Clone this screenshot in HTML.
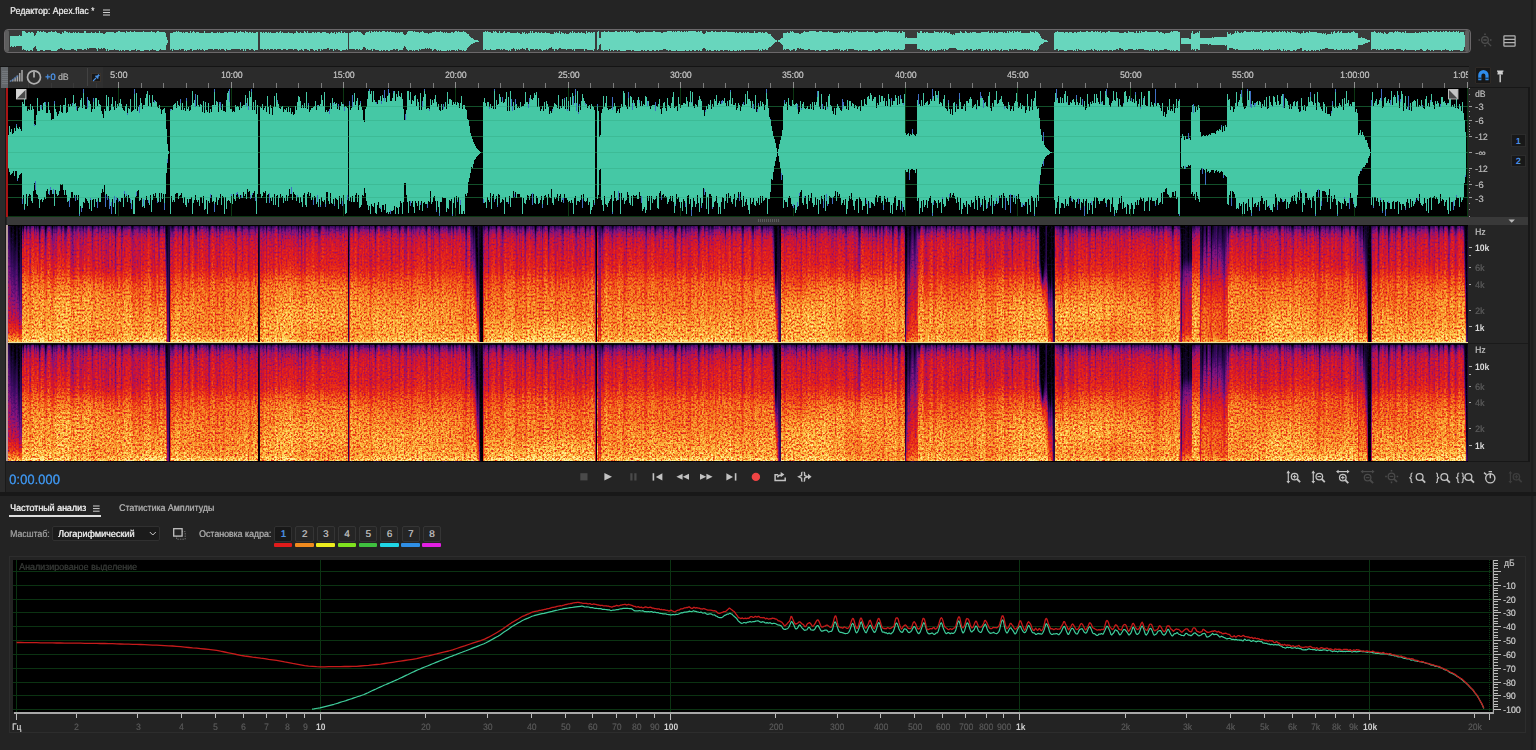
<!DOCTYPE html>
<html lang="ru"><head><meta charset="utf-8"><title>Adobe Audition</title>
<style>
html,body{margin:0;padding:0;background:#242424;}
body{width:1536px;height:750px;overflow:hidden;position:relative;font-family:"Liberation Sans",sans-serif;}
.b{position:absolute;display:block;}
.t{position:absolute;white-space:nowrap;transform-origin:0 50%;text-rendering:geometricPrecision;text-shadow:0.35px 0 0 currentColor;}
svg{overflow:hidden;}
</style></head><body>
<div class="b" style="left:0px;top:0px;width:1536px;height:750px;background:#242424;"></div>
<div class="b" style="left:1531.4px;top:0px;width:2.1px;height:750px;background:#1e1e1e;"></div>
<div class="b" style="left:1533.5px;top:0px;width:2.5px;height:750px;background:#272727;"></div>
<span class="t" style="left:9.5px;top:6.43px;font-size:9.8px;line-height:12.74px;color:#dedede;transform:scaleX(0.894);">Редактор: Apex.flac *</span>
<svg class="b" style="left:103px;top:8.5px" width="8" height="8"><path d="M0 1h7M0 3.5h7M0 6h7" stroke="#d0d0d0" stroke-width="1"/></svg>
<div class="b" style="left:4px;top:28.8px;width:1466.5px;height:24.4px;background:#3a3a3a;border:1.4px solid #6b686a;border-radius:4px;box-sizing:border-box;"></div>
<div class="b" style="left:5.2px;top:30.2px;width:3.6px;height:21.6px;background:#5e5e5e;border-radius:2px;"></div>
<div class="b" style="left:1465.4px;top:30.2px;width:3.6px;height:21.6px;background:#5e5e5e;border-radius:2px;"></div>
<svg class="b" style="left:0;top:0" width="1536" height="60" shape-rendering="crispEdges"><path d="M10.5 36.3V46.5M11.5 36V46.1M12.5 36.1V46.8M13.5 36.3V46.5M14.5 35.9V46.3M15.5 35.7V46.5M16.5 36.2V46M17.5 35.9V45.8M18.5 36.1V46.2M19.5 35.3V45.8M20.5 36.1V45.8M21.5 36V46.2M22.5 30.9V49.5M23.5 31.4V49.4M24.5 31.4V50.1M25.5 32.4V49.8M26.5 32.6V50.6M27.5 32.7V50.4M28.5 31.7V50.6M29.5 32.1V50.5M30.5 32.6V49.6M31.5 32V49.5M32.5 32.3V51.1M33.5 33V48.2M34.5 35.7V46.8M35.5 34.9V46.3M36.5 32.8V48.8M37.5 31.3V50.8M38.5 31V51.1M39.5 31.7V51M40.5 31.1V49.9M41.5 32.1V50M42.5 31.5V50.3M43.5 31V50.8M44.5 32.4V50.8M45.5 32.3V50.1M46.5 32.5V50.2M47.5 32.5V49.9M48.5 32.2V50.2M49.5 32.1V49.9M50.5 31.6V50M51.5 30.9V50.6M52.5 31.5V51.1M53.5 31.5V50.6M54.5 31.9V51.1M55.5 31.4V50.6M56.5 32.3V51.1M57.5 32.8V49.8M58.5 32.9V49.1M59.5 33.1V48.9M60.5 33.8V47.9M61.5 33.9V48.4M62.5 32.2V48.7M63.5 32.8V49.7M64.5 31.2V49.3M65.5 31.3V49.5M66.5 31.6V49.8M67.5 32V50.2M68.5 32.6V50.4M69.5 32.3V49.5M70.5 33.2V49.5M71.5 33V49.3M72.5 33.4V49.1M73.5 32V48.9M74.5 33V50.4M75.5 32.4V49.7M76.5 32.5V51M77.5 32.5V49.1M78.5 31.8V49M79.5 32.9V49M80.5 32.5V49.3M81.5 32.5V49.4M82.5 32.7V49.7M83.5 32.7V49.6M84.5 30.9V48.7M85.5 30.9V48.5M86.5 32.9V49.5M87.5 32.8V48.4M88.5 33.1V48.8M89.5 33V48M90.5 33.3V48.4M91.5 31.8V48M92.5 33.1V48.2M93.5 33V48.4M94.5 33.1V48M95.5 31.6V48.1M96.5 33V49.4M97.5 32.7V51.1M98.5 32.9V48.3M99.5 31.3V48.5M100.5 32.5V48.6M101.5 32.5V47.8M102.5 33.3V48.8M103.5 34.1V48.4M104.5 34V47.6M105.5 33.3V48.6M106.5 32.2V50.7M107.5 32.4V49.3M108.5 32.4V50.5M109.5 31.9V50.2M110.5 32.3V49.9M111.5 31.5V49.6M112.5 32.2V49.6M113.5 32V49.5M114.5 32.7V49.3M115.5 32.6V50.1M116.5 31.5V49.6M117.5 32V49.8M118.5 30.9V49.8M119.5 31V51.1M120.5 31.6V50M121.5 31.5V50.5M122.5 32.2V50.2M123.5 32.4V50.2M124.5 32.3V51.1M125.5 32.7V49.5M126.5 31.4V50.1M127.5 31.6V49.7M128.5 32.2V49.8M129.5 32.3V50.5M130.5 31.3V51.1M131.5 31.6V49.8M132.5 31.8V50.1M133.5 31.5V50.4M134.5 30.9V50.2M135.5 31.5V49.3M136.5 32V51.1M137.5 31.6V49.7M138.5 31.7V49.9M139.5 31.9V50.1M140.5 31.8V50.5M141.5 31.8V51.1M142.5 31.9V51.1M143.5 31V51M144.5 31.9V50.2M145.5 31.8V50.1M146.5 31.6V50.3M147.5 31.7V49.9M148.5 31.5V49.6M149.5 32.3V50.8M150.5 31.6V49.9M151.5 30.9V49.8M152.5 32.2V49.4M153.5 32V49.5M154.5 32.3V50.2M155.5 32.5V49.8M156.5 32.1V50.9M157.5 30.9V50.9M158.5 31.4V50.7M159.5 31.8V50.2M160.5 32V49.4M161.5 32V49.9M162.5 32.4V49.8M163.5 32V50.1M164.5 32.3V50.2M165.5 32.9V49.8M166.5 36.8V45.3M167.5 39.7V42.6M168.5 40.7V41.3M170.5 32.5V49.9M171.5 32.5V49.4M172.5 32.8V50.6M173.5 32.2V49.1M174.5 31.7V50.3M175.5 32.2V50.3M176.5 31.3V50.2M177.5 31.7V49.5M178.5 31.2V49.8M179.5 32.1V49.4M180.5 31.9V50M181.5 32.4V48.9M182.5 32.5V49.1M183.5 31.7V49.2M184.5 32.6V51.1M185.5 32.3V49.7M186.5 31.8V50.6M187.5 32.2V49.5M188.5 32.5V49.7M189.5 32.9V49.6M190.5 31.1V49.4M191.5 33.1V49.4M192.5 32.4V50.5M193.5 31.1V50.1M194.5 32.4V49.5M195.5 32.8V49.9M196.5 32.1V49.7M197.5 32.4V49.1M198.5 31.6V50.2M199.5 33.1V49.4M200.5 33V49.6M201.5 32.5V50.3M202.5 32.7V49.2M203.5 33.1V50.2M204.5 31.3V51.1M205.5 33.3V49.8M206.5 33V49.9M207.5 32.5V49.6M208.5 32.6V49.3M209.5 33V48.9M210.5 33.1V48.6M211.5 32.4V48.7M212.5 32.1V48.5M213.5 33V49.5M214.5 32.5V48.6M215.5 32.5V49.4M216.5 32.9V48.6M217.5 32.4V48.6M218.5 32.8V50.4M219.5 31.9V49.4M220.5 32.7V49.6M221.5 33V48.7M222.5 33V48.9M223.5 32.6V49.4M224.5 31.9V49.8M225.5 31.5V50.6M226.5 32.1V49.3M227.5 32.5V49.5M228.5 32.3V50.3M229.5 32.4V49.5M230.5 32.4V49.6M231.5 31.9V49.2M232.5 32.4V49.1M233.5 32.1V49.2M234.5 33V49.3M235.5 32.8V49.1M236.5 31.1V49.2M237.5 32.7V49.4M238.5 32.4V49.3M239.5 32.1V49.3M240.5 31.2V50.1M241.5 31.5V49.3M242.5 32.3V48.8M243.5 32.2V50.5M244.5 32.5V49.2M245.5 31.3V50.5M246.5 32.4V49.3M247.5 31.6V49.3M248.5 32.7V49M249.5 32.3V50M250.5 31.7V49.5M251.5 33V49.4M252.5 32.4V49.2M253.5 32.5V49.8M254.5 32.9V50.6M255.5 32.7V50M256.5 32V49.7M257.5 32.3V50M260.5 31.6V49.3M261.5 31.8V49.3M262.5 32.9V49.3M263.5 32.1V49.5M264.5 32.5V49.3M265.5 32.3V49.3M266.5 32.1V49.8M267.5 32.9V49M268.5 31.8V48.8M269.5 32.9V49.9M270.5 32V48.8M271.5 33.1V48.7M272.5 33V48.8M273.5 32.5V49.5M274.5 33V49M275.5 32.9V48.7M276.5 32.3V49.5M277.5 32.3V49.4M278.5 32.9V49M279.5 32.3V49.3M280.5 31.3V48.9M281.5 33.2V49.9M282.5 32V49.5M283.5 32.7V49.3M284.5 33.2V48.7M285.5 33.2V49.1M286.5 33.2V49.5M287.5 33.2V49.6M288.5 32.3V48.7M289.5 32.9V48.5M290.5 33.3V48.7M291.5 32.9V48.6M292.5 33.4V48.8M293.5 33.5V50M294.5 32.8V48.9M295.5 33.4V48.9M296.5 31.3V49.2M297.5 32V50.1M298.5 32.5V50.6M299.5 32.9V49.5M300.5 31.8V50.2M301.5 32.6V49.4M302.5 33.1V50.2M303.5 33.3V50.6M304.5 31V49.1M305.5 32.2V49.3M306.5 32.9V48.9M307.5 30.9V50M308.5 33.2V49.9M309.5 32.9V50.7M310.5 33V49.3M311.5 32.5V49M312.5 32.2V49.2M313.5 32.2V49.9M314.5 32.5V50.5M315.5 32.2V50.1M316.5 32.6V50M317.5 31.9V50.5M318.5 32.3V49.2M319.5 31.6V49.3M320.5 32.6V51.1M321.5 32.6V49.1M322.5 32.2V50M323.5 32.2V49M324.5 31.7V49.4M325.5 32.1V48.6M326.5 32.5V48.9M327.5 33.4V48M328.5 33.4V48M329.5 33.7V50.2M330.5 33.4V48.5M331.5 32.1V49.1M332.5 33V48.9M333.5 32.5V50.5M334.5 32.1V49M335.5 33.6V49.5M336.5 32.2V48.9M337.5 32.8V49M338.5 32.4V50.1M339.5 31.6V49.5M340.5 32.8V51.1M341.5 31V50.5M342.5 32.8V49.6M343.5 32.5V50M344.5 32V49.9M345.5 32.7V50.3M346.5 33.3V49.4M347.5 33.1V49.5M349.5 33.2V49.2M350.5 33V48.8M351.5 31.6V48.9M352.5 32.2V49.1M353.5 30.9V49.1M354.5 32.4V49.2M355.5 32.1V49.5M356.5 31.8V49.2M357.5 30.9V49.4M358.5 32.1V49.5M359.5 32.4V49.1M360.5 31.7V50M361.5 32.7V49.8M362.5 33.5V48.5M363.5 34.7V47M364.5 34.9V46.7M365.5 33V48.2M366.5 31.5V49.5M367.5 32.4V49.4M368.5 31.8V49.8M369.5 31.4V49.7M370.5 32.5V50.1M371.5 31.4V49M372.5 32.1V51.1M373.5 32.4V48.7M374.5 30.9V49.2M375.5 31.5V49.6M376.5 31.2V49.6M377.5 31.8V49.7M378.5 31.8V49.5M379.5 31.3V50.5M380.5 31.7V50.8M381.5 31.8V49.7M382.5 31.4V50.6M383.5 31.3V50.3M384.5 31.4V50.3M385.5 31.5V51.1M386.5 32V50.2M387.5 30.9V50.4M388.5 31.6V50.9M389.5 31.6V50.8M390.5 31V50.3M391.5 32.2V50.4M392.5 32.1V50.1M393.5 32.2V49.3M394.5 32.2V49.2M395.5 32.6V50.1M396.5 32.1V49.1M397.5 32.7V49.2M398.5 31.6V50.5M399.5 32.5V50.4M400.5 31.5V49.9M401.5 32.3V49.6M402.5 32.1V50.3M403.5 33.9V48.1M404.5 35.4V46.4M405.5 35.2V46.6M406.5 33.9V48.6M407.5 31.8V49.5M408.5 31.2V50.6M409.5 31.2V49.9M410.5 30.9V50M411.5 30.9V49.6M412.5 30.9V50.8M413.5 32.1V50M414.5 31.4V50.7M415.5 31.8V50.1M416.5 31.8V49.7M417.5 32.1V49.6M418.5 32.3V50.8M419.5 32.5V49M420.5 32V49.7M421.5 31.7V48.6M422.5 30.9V48.7M423.5 31.6V49M424.5 32.5V48.9M425.5 32.7V48.3M426.5 32.8V49.2M427.5 33.4V48.2M428.5 33.5V49.2M429.5 32.8V48M430.5 32.8V48.7M431.5 33.2V48.6M432.5 32.2V50.8M433.5 32.1V49.7M434.5 31.8V49.4M435.5 30.9V49.2M436.5 32V49.8M437.5 31.7V50.9M438.5 31.8V49.6M439.5 31.7V50.5M440.5 30.9V49.7M441.5 31.9V50.7M442.5 32.1V50.9M443.5 32.5V51.1M444.5 32.3V50.5M445.5 32.5V50.7M446.5 32.2V50.7M447.5 32.7V49.7M448.5 32.9V51M449.5 33V49.5M450.5 32.9V51.1M451.5 32.2V49.6M452.5 32.4V49.9M453.5 32.5V49.6M454.5 31.6V49.6M455.5 31.2V51M456.5 31.4V50.3M457.5 32.1V51.1M458.5 31.1V49.2M459.5 32.3V49.8M460.5 32.2V49.6M461.5 31.6V49.7M462.5 31.5V51.1M463.5 30.9V49.6M464.5 31.7V50.5M465.5 32V51.1M466.5 32.5V50M467.5 33.9V48.4M468.5 34.3V47.4M469.5 36.3V45.6M470.5 36.9V45.3M471.5 37.5V44M472.5 38.3V43.7M473.5 39.1V42.9M474.5 39.5V42.6M475.5 39.8V42.2M476.5 40V42M477.5 40.3V41.7M478.5 40.5V41.5M479.5 40.7V41.3M480.5 40.8V41.2M483.5 32V49.9M484.5 31.8V49.9M485.5 30.9V49.4M486.5 31.8V50.3M487.5 30.9V49.7M488.5 31.6V49.9M489.5 31.5V49.8M490.5 31.9V49.4M491.5 32.6V49.7M492.5 32.7V49.8M493.5 30.9V49.7M494.5 32.2V49.8M495.5 31V49.9M496.5 32.4V49M497.5 32.8V48.8M498.5 32.8V48.8M499.5 30.9V48.6M500.5 32.7V49.7M501.5 32.8V48.9M502.5 32.5V49.5M503.5 31.6V49.1M504.5 31V49.4M505.5 32.8V49.8M506.5 32.5V50.3M507.5 31.7V49.5M508.5 32.2V51.1M509.5 31.9V49.7M510.5 32.8V50.8M511.5 32.7V49.4M512.5 33.3V49.3M513.5 32.6V48.4M514.5 32.8V49.1M515.5 32.7V50.9M516.5 33.1V49.1M517.5 32.3V50.2M518.5 33V49.2M519.5 32.5V49.6M520.5 33.5V49.3M521.5 33.5V49.2M522.5 32.3V48.2M523.5 32.6V49.2M524.5 32.4V48.7M525.5 33.7V49.6M526.5 33.2V48.2M527.5 33.5V48.2M528.5 33.1V50M529.5 33.3V51.1M530.5 30.9V48.5M531.5 32.8V48.9M532.5 30.9V49.1M533.5 33V49.1M534.5 32.7V49.5M535.5 32.2V48.9M536.5 32.1V48.9M537.5 33.1V48.9M538.5 31.9V49.6M539.5 33.3V49.3M540.5 32.9V49.2M541.5 31.5V49.5M542.5 32.8V50.8M543.5 32.7V49.8M544.5 33.4V49.9M545.5 32.1V50.3M546.5 32.6V48.9M547.5 33.2V50.2M548.5 32.6V48.5M549.5 33.3V48.4M550.5 34.3V48.4M551.5 34.1V47.3M552.5 33.7V48.5M553.5 33.6V48.9M554.5 32.1V50.8M555.5 32.8V49.3M556.5 31.9V49M557.5 32.5V49.9M558.5 32.6V49.3M559.5 30.9V48.4M560.5 33.6V48.2M561.5 32.4V49.1M562.5 33.4V48.8M563.5 33V48.9M564.5 33.5V49.3M565.5 33V49.1M566.5 33.5V49.9M567.5 33.7V49.2M568.5 33.7V48.6M569.5 32.8V48.5M570.5 31.7V48.9M571.5 32.9V49.1M572.5 30.9V49.8M573.5 33.3V49M574.5 32.3V51.1M575.5 33V49.2M576.5 32.8V48.7M577.5 32.5V48.7M578.5 32.2V48.8M579.5 32.9V49.2M580.5 33V48.7M581.5 32.2V48.5M582.5 32.7V49.2M583.5 33.3V48.5M584.5 32.8V51.1M585.5 33.6V48.7M586.5 31.2V49.2M587.5 33.2V49.8M588.5 31.9V49.6M589.5 32.3V50.3M590.5 32.5V49.7M591.5 32.4V49.6M592.5 32.9V49.6M593.5 31.9V51.1M594.5 32V49.4M597.5 31.8V49.9M598.5 31.3V49.4M599.5 37.5V44.5M600.5 37.9V44M601.5 32.3V50M602.5 31.7V50.3M603.5 32.4V51M604.5 31V50.1M605.5 32.2V49.8M606.5 32.2V50.3M607.5 31.8V49.6M608.5 31V50.6M609.5 32.2V49.4M610.5 31.7V51.1M611.5 31.8V49.9M612.5 31.5V49.8M613.5 32.1V50.7M614.5 32.2V49.9M615.5 31.2V49.9M616.5 30.9V50.3M617.5 31.8V50.5M618.5 31.8V50M619.5 31.9V50M620.5 31.3V50.6M621.5 31.5V50.7M622.5 32.2V51.1M623.5 30.9V50.7M624.5 31.7V50.7M625.5 32.1V50.9M626.5 30.9V50.1M627.5 31.6V49.8M628.5 31.1V49.7M629.5 31.6V49.7M630.5 31V50M631.5 30.9V51.1M632.5 30.9V50M633.5 31.5V50.4M634.5 30.9V51.1M635.5 32V50.9M636.5 32.5V50.8M637.5 32.8V51.1M638.5 32.1V50.6M639.5 32.5V50.5M640.5 32V50.5M641.5 31.7V50.1M642.5 31.9V50M643.5 31.5V50.5M644.5 31.4V49.9M645.5 32V50.5M646.5 32V50.7M647.5 32.1V50M648.5 32.2V50.1M649.5 31.6V51.1M650.5 31.6V50.6M651.5 31.8V51.1M652.5 32.1V50.2M653.5 31.3V50.3M654.5 31.4V50.5M655.5 31.9V50.5M656.5 32.1V50.4M657.5 31.6V50.1M658.5 31.5V51.1M659.5 31.6V50.4M660.5 31.9V50.2M661.5 32.5V49.6M662.5 32.7V49.5M663.5 32.2V49.3M664.5 31.8V49.1M665.5 31.6V49.1M666.5 31.8V49.9M667.5 31.4V49.6M668.5 31.1V51.1M669.5 31.3V49.8M670.5 30.9V49.8M671.5 30.9V50.6M672.5 31.7V51M673.5 31V50.5M674.5 31.5V51.1M675.5 31.3V50.8M676.5 31.6V50.1M677.5 30.9V51.1M678.5 30.9V50.6M679.5 31V51.1M680.5 31.6V50.7M681.5 31.3V51.1M682.5 31.9V50.9M683.5 31.9V50.7M684.5 30.9V51.1M685.5 31.6V50.3M686.5 30.9V50.7M687.5 31.5V50.9M688.5 31.2V51.1M689.5 30.9V50.1M690.5 30.9V51.1M691.5 30.9V51.1M692.5 30.9V50.4M693.5 30.9V50.2M694.5 30.9V50.5M695.5 31.4V50.5M696.5 31.8V50.1M697.5 32.3V50.1M698.5 31.2V51.1M699.5 31.8V50.3M700.5 31.2V51.1M701.5 31.2V50.9M702.5 32.7V49.3M703.5 33.9V48.2M704.5 33.9V48M705.5 32.8V49.1M706.5 30.9V50.5M707.5 31.6V50.4M708.5 31.9V51.1M709.5 31.8V49.6M710.5 31.7V49.8M711.5 31.4V51.1M712.5 31.1V50.7M713.5 31.8V51.1M714.5 31.6V50.2M715.5 30.9V49.8M716.5 31.7V50.5M717.5 31.7V50.3M718.5 31.8V50.6M719.5 31.7V50.5M720.5 31.8V49.6M721.5 31.3V50.1M722.5 31.9V50.3M723.5 32.1V50.8M724.5 32.3V50.3M725.5 32.2V50.4M726.5 31.3V49.8M727.5 32.1V49.9M728.5 32V50.8M729.5 32.2V50.2M730.5 31.9V51.1M731.5 32.2V51M732.5 31.5V51.1M733.5 32.2V50M734.5 31.8V51.1M735.5 32.6V51M736.5 31.9V51M737.5 32.8V50.2M738.5 32.9V50.7M739.5 32.4V49.9M740.5 31.9V51.1M741.5 32.5V49.7M742.5 32.6V49.6M743.5 32.1V50M744.5 32.8V50.5M745.5 32V50.2M746.5 32.7V50M747.5 32.4V50.2M748.5 31.7V50.1M749.5 32.8V50.2M750.5 33V50.1M751.5 33V49.7M752.5 32.9V50.2M753.5 32.9V49.6M754.5 30.9V49.5M755.5 32.8V49.8M756.5 32.5V50M757.5 32.7V49.7M758.5 31.6V49.4M759.5 31.6V50.6M760.5 31.6V49.8M761.5 32.9V50.6M762.5 31.7V49.3M763.5 33.1V49.5M764.5 32.6V50M765.5 31.5V48.8M766.5 31.8V50.1M767.5 33V49.5M768.5 33.5V47.9M769.5 33.7V47.1M770.5 34.4V46.6M771.5 36.4V46M772.5 36.5V45M773.5 38V44.2M774.5 38.8V43.2M775.5 39.6V42.4M776.5 40.3V41.7M778.5 40.4V41.6M779.5 39.6V42.4M780.5 38.9V43.2M781.5 38.1V44.1M782.5 37.5V45M783.5 32.7V49.8M784.5 33.3V49.1M785.5 33.1V50.4M786.5 32.8V49.4M787.5 31.6V49.1M788.5 33.1V49.2M789.5 33.1V49.8M790.5 31.1V51.1M791.5 32V49.8M792.5 30.9V49.6M793.5 31.9V48.9M794.5 32.9V49M795.5 32.6V51.1M796.5 32.8V49.5M797.5 32.7V47.9M798.5 33.1V48.4M799.5 33.7V48.7M800.5 34.1V48.2M801.5 33.3V49.4M802.5 33.2V49.3M803.5 31.5V49.3M804.5 30.9V50.4M805.5 32.3V50.1M806.5 31.8V50.4M807.5 32.2V49.7M808.5 32.2V49.4M809.5 31V49.2M810.5 30.9V50.2M811.5 31V49.8M812.5 30.9V49.9M813.5 31.1V49.6M814.5 30.9V50.4M815.5 30.9V50.7M816.5 31.5V50.1M817.5 31.9V49.9M818.5 31.9V49.7M819.5 31.4V51.1M820.5 31.4V51.1M821.5 30.9V49.8M822.5 32V50M823.5 32.1V50M824.5 32.1V50.3M825.5 32.1V49.8M826.5 32.3V50.7M827.5 32.3V50.5M828.5 31V50.3M829.5 32.1V50.2M830.5 32.1V50.3M831.5 31.7V49.8M832.5 32.2V50.1M833.5 33V49M834.5 33.4V49.6M835.5 33.4V49.3M836.5 33.2V48.6M837.5 32.5V48.8M838.5 32.2V49.9M839.5 32.6V49.1M840.5 32V50.6M841.5 31.3V50.4M842.5 32.1V50.1M843.5 30.9V50.5M844.5 32.3V49.6M845.5 32.2V49.8M846.5 32V49M847.5 32V51.1M848.5 32.5V49.4M849.5 32.3V49M850.5 31.3V49.3M851.5 32.5V49.1M852.5 31.1V49.2M853.5 32.4V49.2M854.5 32.1V49.9M855.5 32.2V49.6M856.5 31.3V49.7M857.5 31.3V49.7M858.5 31.8V51.1M859.5 32.3V49.9M860.5 32.3V50.2M861.5 31.8V51.1M862.5 32V50.2M863.5 31.7V49.8M864.5 32V49.9M865.5 31.7V49.9M866.5 32.4V50.2M867.5 31.3V50.1M868.5 31.9V51.1M869.5 32.2V50.7M870.5 31.8V50.7M871.5 32.4V50.9M872.5 32.4V50M873.5 31V50.1M874.5 32V50.7M875.5 32.8V49.7M876.5 32.6V49.9M877.5 32.5V50.2M878.5 31.5V49.3M879.5 32.4V49.2M880.5 32.2V49.8M881.5 32V50.7M882.5 31.7V51.1M883.5 31V49.8M884.5 32V49.9M885.5 31.2V50.4M886.5 31.3V49.4M887.5 32.3V49.6M888.5 30.9V49.4M889.5 32.2V49.8M890.5 31.9V51.1M891.5 32.3V50M892.5 31.6V49.9M893.5 32.1V50.4M894.5 32.2V49.4M895.5 31.6V50.1M896.5 31.5V49.9M897.5 32.8V50M898.5 31.8V49.2M899.5 31.1V49.6M900.5 32.5V49.8M901.5 32.5V49.7M902.5 30.9V49.9M903.5 31.7V50M904.5 32.3V49.3M905.5 38.1V44.1M906.5 37.4V44.2M907.5 37.8V44.2M908.5 37.9V44.3M909.5 37.9V44M910.5 38.1V44M911.5 37.9V44M912.5 38V44.4M913.5 38V44.1M914.5 37.8V44.2M915.5 37.8V44.4M916.5 37.7V44.1M917.5 32.4V49.3M918.5 33V48.9M919.5 32.5V49.1M920.5 30.9V49.7M921.5 31.4V50.4M922.5 32.5V49.3M923.5 32.8V50.1M924.5 32.3V50.1M925.5 32.8V51.1M926.5 32.3V50.3M927.5 31.6V49.8M928.5 33V51.1M929.5 33.1V49.9M930.5 33.2V49.2M931.5 33.2V49.1M932.5 32.8V50.7M933.5 32.8V49.7M934.5 30.9V50.7M935.5 32.4V49.8M936.5 31.7V51.1M937.5 32.3V49.7M938.5 32.2V50.1M939.5 32.6V49.9M940.5 32V50.1M941.5 32.5V49.2M942.5 32.3V49.7M943.5 31.3V49.2M944.5 32.7V50.6M945.5 32V49.1M946.5 32.4V49.5M947.5 32.8V49.9M948.5 32.9V48.5M949.5 31.5V48.4M950.5 33.8V48.4M951.5 34.4V48.2M952.5 34.9V48.4M953.5 34.3V47.9M954.5 34.5V48.1M955.5 33.3V48.3M956.5 33.4V49.4M957.5 33.1V49.5M958.5 32.9V49.7M959.5 32.8V49.6M960.5 30.9V50.1M961.5 31.9V50.4M962.5 32.7V49.7M963.5 32.7V50.8M964.5 32.5V50.2M965.5 30.9V49.6M966.5 32.3V49.4M967.5 32.7V48.9M968.5 32.8V50.4M969.5 32.8V50.3M970.5 32.3V49.1M971.5 32.5V49.4M972.5 31.9V50.9M973.5 31.9V49.8M974.5 32V49.9M975.5 32.3V50.4M976.5 32.7V49.4M977.5 32.5V49.5M978.5 32.9V48.8M979.5 32.5V48.7M980.5 32.9V48.5M981.5 32.3V51.1M982.5 31.9V48.7M983.5 32.4V50.9M984.5 32.3V49.6M985.5 31.5V50.3M986.5 32.2V49M987.5 31.9V49.8M988.5 30.9V50.5M989.5 33V48.9M990.5 33.1V49.6M991.5 32.4V50.9M992.5 33.1V49.5M993.5 30.9V49.6M994.5 32.6V50M995.5 32.3V49.4M996.5 32.9V50.2M997.5 32.8V49.7M998.5 32.2V49.9M999.5 32V50.5M1000.5 32V49.8M1001.5 32V49.2M1002.5 31.7V50.7M1003.5 32.8V49.7M1004.5 32.4V49.9M1005.5 32.5V50.1M1006.5 32.8V49.5M1007.5 31.1V49.8M1008.5 33V50.5M1009.5 31.1V49.4M1010.5 32.3V49.1M1011.5 31.9V49.6M1012.5 30.9V49.2M1013.5 32.7V49.9M1014.5 31.4V49.3M1015.5 31.6V49.3M1016.5 32V49.4M1017.5 31.3V49.7M1018.5 32V49.8M1019.5 32.4V50M1020.5 30.9V49.6M1021.5 32.5V50.1M1022.5 32.6V49.4M1023.5 32.8V49.5M1024.5 32.6V49.1M1025.5 32.6V49.4M1026.5 32.7V50.1M1027.5 32.9V49.2M1028.5 32.9V49.9M1029.5 32.9V49.4M1030.5 31.4V49.7M1031.5 31.8V49.8M1032.5 32.3V49.5M1033.5 32.2V50.7M1034.5 32.7V51.1M1035.5 31.2V50.3M1036.5 32.3V50.6M1037.5 31.5V49.9M1038.5 32.7V49.2M1039.5 34.2V46.2M1040.5 36.3V45.3M1041.5 37.9V43.8M1042.5 38.7V43.5M1043.5 39.1V42.7M1044.5 39.8V42.2M1045.5 40V41.9M1046.5 40.4V41.6M1047.5 40.5V41.5M1048.5 40.7V41.3M1049.5 40.8V41.2M1050.5 40.9V41.1M1054.5 32.5V49.5M1055.5 32.3V49.8M1056.5 31.7V49.4M1057.5 30.9V49.3M1058.5 31.9V51.1M1059.5 31.6V49.8M1060.5 31.7V50.3M1061.5 31.9V50.3M1062.5 31.7V50.2M1063.5 31.7V50.2M1064.5 32.7V51.1M1065.5 32.3V51.1M1066.5 32.4V51.1M1067.5 32.3V50.2M1068.5 32.8V49.8M1069.5 31.6V50M1070.5 32.3V49.7M1071.5 31.8V50M1072.5 32.5V49.7M1073.5 32.8V50.8M1074.5 32.4V50M1075.5 32.1V51M1076.5 32.5V49.1M1077.5 32.4V51.1M1078.5 31.6V49.4M1079.5 31.9V49.5M1080.5 31.4V49.7M1081.5 32.2V50.2M1082.5 31.8V50.8M1083.5 31.8V49.7M1084.5 31.9V50.9M1085.5 31.7V51M1086.5 31.1V49.7M1087.5 30.9V49.6M1088.5 32.2V49.6M1089.5 31.8V49.5M1090.5 32.1V50.4M1091.5 30.9V49.3M1092.5 30.9V50.3M1093.5 31.5V50.8M1094.5 31.7V49.4M1095.5 30.9V49.5M1096.5 32.1V50M1097.5 30.9V51.1M1098.5 31.9V49.8M1099.5 31.8V50.6M1100.5 31.4V50.2M1101.5 32.6V49.8M1102.5 31.6V50.5M1103.5 32.2V50.1M1104.5 32V50.3M1105.5 32.9V50.2M1106.5 32.3V50.1M1107.5 32.1V49.7M1108.5 31.4V50.5M1109.5 30.9V49.8M1110.5 31.9V50.2M1111.5 32V50.1M1112.5 32.2V51.1M1113.5 31.8V50M1114.5 32.2V49.8M1115.5 32.3V50.1M1116.5 31.7V49.1M1117.5 31.9V49.4M1118.5 32.3V49.9M1119.5 32.9V48.4M1120.5 32.8V48.3M1121.5 33V49.1M1122.5 32.8V49.3M1123.5 32.7V49.7M1124.5 31.7V51.1M1125.5 32.2V50M1126.5 32.7V49.9M1127.5 32.7V49.8M1128.5 31.2V49.2M1129.5 32.3V49.2M1130.5 32.1V48.7M1131.5 31.7V49.1M1132.5 32V48.9M1133.5 32.4V49.7M1134.5 32.6V49.9M1135.5 33.1V50M1136.5 31.4V49M1137.5 32.9V50.1M1138.5 32.6V48.6M1139.5 31.4V48.8M1140.5 32.7V49.1M1141.5 31.3V49M1142.5 32V48.9M1143.5 32.2V49.3M1144.5 31.7V50.2M1145.5 30.9V49.7M1146.5 30.9V50M1147.5 31.9V49.6M1148.5 31.6V50.4M1149.5 32.1V50.7M1150.5 32.3V50.2M1151.5 31.6V50.8M1152.5 32.1V49.4M1153.5 31.7V51M1154.5 32.1V49.4M1155.5 32V49.8M1156.5 30.9V49.5M1157.5 30.9V49.6M1158.5 32.2V50.8M1159.5 32.6V49.6M1160.5 31.7V49.9M1161.5 31.7V50.3M1162.5 32.9V49.5M1163.5 33.2V49.6M1164.5 33.6V49.1M1165.5 32.9V48.7M1166.5 33V48.5M1167.5 32.7V49.9M1168.5 33V49.8M1169.5 32.8V49.7M1170.5 32.4V50.5M1171.5 31.4V50.1M1172.5 31.9V51.1M1173.5 31V50.1M1174.5 30.9V50.8M1175.5 30.9V50.5M1176.5 31.4V49.9M1177.5 30.9V50.2M1178.5 32.1V51.1M1179.5 31.8V51.1M1181.5 38.1V43.9M1182.5 38.3V43.7M1183.5 38.3V43.9M1184.5 38.1V43.6M1185.5 38.3V43.7M1186.5 38V44M1187.5 38.4V43.5M1188.5 38.1V43.6M1189.5 38.5V44M1190.5 38.5V43.5M1191.5 33.3V49.5M1192.5 31.4V49M1193.5 33.6V49.5M1194.5 33.5V49.3M1195.5 32.8V50.6M1196.5 32.9V49.1M1197.5 32.1V49.2M1198.5 32.7V49.5M1199.5 31.4V49.6M1200.5 38.1V43.8M1201.5 37.7V44M1202.5 37.7V44.1M1203.5 37.7V44.4M1204.5 37.7V44.1M1205.5 37.6V44.2M1206.5 37.9V44M1207.5 37.6V44.1M1208.5 37.7V44.9M1209.5 37.7V44.2M1210.5 38V44.2M1211.5 37.6V44.7M1212.5 37.2V44.8M1213.5 37.5V44.7M1214.5 37.4V45.1M1215.5 37.4V44.8M1216.5 37.4V44.8M1217.5 37.3V44.7M1218.5 37.2V45.1M1219.5 37.1V44.7M1220.5 37.3V44.7M1221.5 37.1V44.9M1222.5 36.5V45M1223.5 37.1V45.1M1224.5 37.2V45M1225.5 37.1V45.5M1226.5 36.6V44.9M1227.5 31.8V49.5M1228.5 33.6V49.6M1229.5 34V48.3M1230.5 33.4V48.4M1231.5 34.5V48.1M1232.5 33.9V47.8M1233.5 34V48.7M1234.5 32.5V49.1M1235.5 31.1V49.8M1236.5 32.8V49.4M1237.5 30.9V49.3M1238.5 32V49.8M1239.5 32.9V49.7M1240.5 32.6V50.3M1241.5 32V50M1242.5 32.7V50M1243.5 32.2V50.3M1244.5 31V49.6M1245.5 30.9V50.3M1246.5 31.9V50M1247.5 31.8V50.4M1248.5 32.1V50.2M1249.5 31.8V50.1M1250.5 31.8V49.7M1251.5 31V49.8M1252.5 32V50.2M1253.5 30.9V49.4M1254.5 32.1V49.6M1255.5 31.6V49.8M1256.5 31.7V49.4M1257.5 31.9V50.1M1258.5 31.7V49.4M1259.5 31.7V50M1260.5 30.9V49.3M1261.5 30.9V49.5M1262.5 32.5V50.4M1263.5 32.4V50.9M1264.5 32.4V50.2M1265.5 31.9V49.9M1266.5 31.3V50.2M1267.5 32.4V49.8M1268.5 31.9V49.8M1269.5 32.2V49.2M1270.5 31.4V49.6M1271.5 32.4V49.9M1272.5 32.7V50.4M1273.5 32.2V50.2M1274.5 32.4V49.8M1275.5 30.9V49.7M1276.5 31.8V49.8M1277.5 32.1V49.3M1278.5 32.1V49.6M1279.5 31.4V49.4M1280.5 31.6V49.5M1281.5 31.9V50.6M1282.5 30.9V50.9M1283.5 31.6V49.4M1284.5 31.4V50.8M1285.5 32.1V50M1286.5 32.5V50.7M1287.5 30.9V49.8M1288.5 32.3V50.4M1289.5 31.7V49.6M1290.5 32.6V50.5M1291.5 30.9V50.9M1292.5 31.6V51.1M1293.5 32.1V49.5M1294.5 31.9V49.8M1295.5 32.3V51.1M1296.5 32.5V49.7M1297.5 31.7V49M1298.5 33.4V48.6M1299.5 32.6V48.5M1300.5 33.8V47.8M1301.5 33.4V48.4M1302.5 33.2V50.5M1303.5 31.3V50.6M1304.5 33.2V49.8M1305.5 32.9V49.5M1306.5 32.4V50.5M1307.5 31.6V50.5M1308.5 32.6V49.7M1309.5 31.2V51.1M1310.5 32.3V51M1311.5 32.3V49.9M1312.5 32.3V50M1313.5 32.2V51.1M1314.5 31.7V50.2M1315.5 31.9V51M1316.5 31.5V50M1317.5 32.5V49.5M1318.5 32.8V50.2M1319.5 32.7V50.5M1320.5 32.8V49.3M1321.5 33.3V50.4M1322.5 33.6V49.2M1323.5 32.8V48.8M1324.5 33.6V49M1325.5 33.4V48.2M1326.5 34.6V48.1M1327.5 33.6V48.4M1328.5 34V48.6M1329.5 33.9V49.2M1330.5 33.5V48.7M1331.5 32.3V48.5M1332.5 33.5V48.8M1333.5 32.3V48.9M1334.5 31V49.5M1335.5 32.8V49.9M1336.5 32.8V49.4M1337.5 32V49.5M1338.5 31V49.5M1339.5 32.5V50.3M1340.5 32.4V49.9M1341.5 30.9V49M1342.5 32.5V49.6M1343.5 33V49.6M1344.5 33V49.4M1345.5 32.6V49.5M1346.5 32.6V49.4M1347.5 32.7V49.7M1348.5 31.9V48.8M1349.5 32.8V49.6M1350.5 32.9V50M1351.5 31.7V50.1M1352.5 31.7V49.1M1353.5 31.1V48.9M1354.5 31.9V48.9M1355.5 32.5V49M1356.5 32.9V49.6M1357.5 33.4V49.3M1358.5 37.7V44.7M1359.5 37.5V44.6M1360.5 37.6V44.7M1361.5 37.3V44.5M1362.5 37.9V44.5M1363.5 38.1V43.9M1364.5 38.2V43.7M1365.5 38.8V43.3M1366.5 39.1V42.9M1367.5 39.6V42.5M1368.5 39.9V42.1M1369.5 40.4V41.5M1371.5 32V49.7M1372.5 31.6V49.3M1373.5 31.7V48.7M1374.5 31.2V49.2M1375.5 32.2V48.7M1376.5 32.6V50.3M1377.5 32.7V49.4M1378.5 32.4V49.6M1379.5 33.2V49.6M1380.5 32.3V49.2M1381.5 33.4V50.4M1382.5 32.9V50.2M1383.5 33.7V49.5M1384.5 31.5V49.3M1385.5 32.5V49.4M1386.5 33.7V49.8M1387.5 33.8V49.2M1388.5 32.6V50.2M1389.5 32.4V49M1390.5 31.8V49.3M1391.5 32.2V49.2M1392.5 32.4V49.4M1393.5 32.7V49M1394.5 31.5V49.5M1395.5 30.9V49.5M1396.5 32.1V48.9M1397.5 30.9V49.4M1398.5 32V49.4M1399.5 31.6V49.3M1400.5 32.1V49.3M1401.5 32.5V49.5M1402.5 32.4V49.9M1403.5 32V51.1M1404.5 32.8V49.5M1405.5 30.9V49.4M1406.5 32.7V50.2M1407.5 32.9V49.9M1408.5 32.9V50M1409.5 32.5V49.6M1410.5 32.6V50.2M1411.5 32.7V49.6M1412.5 32.6V49.8M1413.5 32.7V49.8M1414.5 32.8V49.6M1415.5 31.8V50.9M1416.5 33.2V49.9M1417.5 33.2V49.7M1418.5 33.3V50M1419.5 31.8V50.1M1420.5 32.7V49.4M1421.5 31.6V49.3M1422.5 32.2V50M1423.5 31.8V50.5M1424.5 32.4V50.9M1425.5 31.8V50.5M1426.5 32.3V49.6M1427.5 32.5V49.4M1428.5 30.9V49.8M1429.5 31.9V49.6M1430.5 31.6V50.9M1431.5 31.6V49.9M1432.5 31V50.2M1433.5 31.4V50.7M1434.5 31.9V50.1M1435.5 31.5V49.6M1436.5 30.9V50.4M1437.5 32.1V49.7M1438.5 31.7V49.6M1439.5 32.2V49.6M1440.5 31.2V50M1441.5 32.4V51.1M1442.5 31.7V49.5M1443.5 31.2V49.7M1444.5 32.3V49.7M1445.5 30.9V49.3M1446.5 31V49.7M1447.5 32V50.2M1448.5 32.1V50.1M1449.5 31.3V51.1M1450.5 31.7V51.1M1451.5 31.8V49.5M1452.5 31.9V50.7M1453.5 31.3V49.5M1454.5 31.7V50.1M1455.5 31.7V50M1456.5 31.3V50.4M1457.5 32.2V50M1458.5 31.2V50.3M1459.5 32.6V50.2M1460.5 31.5V51.1M1461.5 32.1V51M1462.5 32.2V50.5M1463.5 32.4V49.5M1464.5 34.6V47.4" stroke="#68d6bd" stroke-width="1" fill="none"/></svg>
<svg class="b" style="left:1476px;top:32px" width="20" height="18" fill="none" stroke="#4d4d4d" stroke-width="1.3">
<circle cx="9" cy="8" r="3.3"/><path d="M7.3 8h3.4M11.5 10.5l3.6 3.6" /><path d="M9 1.5v1.5M9 13v1.5M2.5 8h1.5M14 8h1.5" stroke-width="1.6"/></svg>
<svg class="b" style="left:1502.6px;top:34.6px" width="14" height="13" fill="none" stroke="#b4b4b4"><rect x="0.9" y="0.9" width="11.2" height="10.2" rx="0.6" stroke-width="1.2"/><path d="M1 4.4h11M1 7.6h11" stroke-width="1.2"/></svg>
<div class="b" style="left:0px;top:66px;width:1468.5px;height:22px;background:#2b2b2b;"></div>
<div class="b" style="left:0px;top:66px;width:1468.5px;height:1px;background:#141414;"></div>
<svg class="b" style="left:0;top:0" width="1469" height="90" shape-rendering="crispEdges"><path d="M118.5 81.5V88M231.5 81.5V88M343.5 81.5V88M455.5 81.5V88M568.5 81.5V88M680.5 81.5V88M793.5 81.5V88M905.5 81.5V88M1017.5 81.5V88M1130.5 81.5V88M1242.5 81.5V88M1354.5 81.5V88M1467.5 81.5V88" stroke="#8f8f8f" stroke-width="1"/><path d="M28.5 83.3V88M51.5 83.3V88M73.5 83.3V88M96.5 83.3V88M141.5 83.3V88M163.5 83.3V88M186.5 83.3V88M208.5 83.3V88M253.5 83.3V88M276.5 83.3V88M298.5 83.3V88M321.5 83.3V88M366.5 83.3V88M388.5 83.3V88M410.5 83.3V88M433.5 83.3V88M478.5 83.3V88M500.5 83.3V88M523.5 83.3V88M545.5 83.3V88M590.5 83.3V88M613.5 83.3V88M635.5 83.3V88M658.5 83.3V88M703.5 83.3V88M725.5 83.3V88M748.5 83.3V88M770.5 83.3V88M815.5 83.3V88M838.5 83.3V88M860.5 83.3V88M882.5 83.3V88M927.5 83.3V88M950.5 83.3V88M972.5 83.3V88M995.5 83.3V88M1040.5 83.3V88M1062.5 83.3V88M1085.5 83.3V88M1107.5 83.3V88M1152.5 83.3V88M1175.5 83.3V88M1197.5 83.3V88M1220.5 83.3V88M1265.5 83.3V88M1287.5 83.3V88M1310.5 83.3V88M1332.5 83.3V88M1377.5 83.3V88M1399.5 83.3V88M1422.5 83.3V88M1444.5 83.3V88" stroke="#7c7c7c" stroke-width="1"/></svg>
<div class="b" style="left:104px;top:67px;width:1364.3px;height:21px;overflow:hidden">
<span class="t" style="left:6.13px;top:2.13px;font-size:9.3px;line-height:12.09px;color:#b6b6b6;transform:scaleX(0.961);">5:00</span>
<span class="t" style="left:116.5px;top:2.13px;font-size:9.3px;line-height:12.09px;color:#b6b6b6;transform:scaleX(0.92);">10:00</span>
<span class="t" style="left:228.88px;top:2.13px;font-size:9.3px;line-height:12.09px;color:#b6b6b6;transform:scaleX(0.92);">15:00</span>
<span class="t" style="left:341.25px;top:2.13px;font-size:9.3px;line-height:12.09px;color:#b6b6b6;transform:scaleX(0.92);">20:00</span>
<span class="t" style="left:453.63px;top:2.13px;font-size:9.3px;line-height:12.09px;color:#b6b6b6;transform:scaleX(0.92);">25:00</span>
<span class="t" style="left:566px;top:2.13px;font-size:9.3px;line-height:12.09px;color:#b6b6b6;transform:scaleX(0.92);">30:00</span>
<span class="t" style="left:678.38px;top:2.13px;font-size:9.3px;line-height:12.09px;color:#b6b6b6;transform:scaleX(0.92);">35:00</span>
<span class="t" style="left:790.75px;top:2.13px;font-size:9.3px;line-height:12.09px;color:#b6b6b6;transform:scaleX(0.92);">40:00</span>
<span class="t" style="left:903.13px;top:2.13px;font-size:9.3px;line-height:12.09px;color:#b6b6b6;transform:scaleX(0.92);">45:00</span>
<span class="t" style="left:1015.5px;top:2.13px;font-size:9.3px;line-height:12.09px;color:#b6b6b6;transform:scaleX(0.92);">50:00</span>
<span class="t" style="left:1127.88px;top:2.13px;font-size:9.3px;line-height:12.09px;color:#b6b6b6;transform:scaleX(0.92);">55:00</span>
<span class="t" style="left:1236.3px;top:2.13px;font-size:9.3px;line-height:12.09px;color:#b6b6b6;transform:scaleX(0.944);">1:00:00</span>
<span class="t" style="left:1348.67px;top:2.13px;font-size:9.3px;line-height:12.09px;color:#b6b6b6;transform:scaleX(0.944);">1:05:00</span>
</div>
<div class="b" style="left:0px;top:67px;width:103px;height:21px;background:#303030;opacity:.88;"></div>
<div class="b" style="left:1.2px;top:67px;width:6.8px;height:20.5px;background:#63676b;"></div>
<svg class="b" style="left:2px;top:70px" width="6" height="16"><path d="M1 1v14M3 1v14M5 1v14" stroke="#858a90" stroke-width="1" stroke-dasharray="1 1"/></svg>
<svg class="b" style="left:9px;top:69px" width="15" height="14"><path d="M1.5 12.5v-1M3.8 12.5v-2.2M6.1 12.5v-4M8.4 12.5v-6M10.7 12.5v-8.5M13 12.5v-11.5" stroke="#a9a9a9" stroke-width="1.5"/><path d="M1 12.8L9 6.5" stroke="#3f6fb0" stroke-width="1.2" opacity=".7"/></svg>
<svg class="b" style="left:25px;top:68px" width="18" height="18" fill="none" stroke="#b0b0b0" stroke-width="1.7"><circle cx="9" cy="9.3" r="6.5"/><path d="M9 9.5V3.7"/></svg>
<span class="t" style="left:45.2px;top:71.33px;font-size:9.4px;line-height:12.22px;color:#4a90e2;transform:scaleX(0.98);">+0</span>
<span class="t" style="left:58.4px;top:71.33px;font-size:9.4px;line-height:12.22px;color:#a2a2a2;transform:scaleX(0.913);">dB</span>
<div class="b" style="left:87.2px;top:67.5px;width:1px;height:18px;background:#424242;"></div>
<div class="b" style="left:90.8px;top:72.6px;width:10.3px;height:9.6px;background:#171717;border:1px solid #3a332c;box-sizing:border-box;"></div>
<svg class="b" style="left:91.5px;top:73.2px" width="9" height="9"><path d="M1 8L4 5" stroke="#4a90e2" stroke-width="1.1"/><path d="M3 3.2L5.8 6l.9-.9-.5-1 1.7-1.7L6.6 1.1 4.9 2.8l-1-.5z" fill="#4a90e2"/></svg>
<div class="b" style="left:1475px;top:67.2px;width:15.8px;height:16.4px;background:#171717;border:1px solid #2f2a26;box-sizing:border-box;border-radius:1px;"></div>
<svg class="b" style="left:1476.5px;top:69px" width="13" height="13"><path d="M1.2 11.2V6.3a5.2 5.2 0 0 1 10.4 0v4.9h-3.2V6.6a2 2 0 0 0-4 0v4.6z" fill="#2f8cec"/><path d="M1.2 9.2h3.2M8.4 9.2h3.2" stroke="#171717" stroke-width="0.9"/></svg>
<svg class="b" style="left:1496px;top:69.5px" width="9" height="13"><path d="M1 0.6h6.4v1.2H6.6L7 4.6H1.4l.4-2.8H1z" fill="#cfcfcf"/><path d="M4.2 4.6v7.6" stroke="#c4c4c4" stroke-width="1.5"/></svg>
<div class="b" style="left:0px;top:88px;width:5.3px;height:404px;background:#2b2b2b;"></div>
<div class="b" style="left:5.3px;top:88px;width:1px;height:404px;background:#1a1a1a;"></div>
<div class="b" style="left:7px;top:88px;width:1461.2px;height:128.8px;background:#000;"></div>
<svg class="b" style="left:0;top:0" width="1469" height="218" shape-rendering="crispEdges">
<path d="M8 106.5H1468M8 197.5H1468M8 120.5H1468M8 184.5H1468M8 136.5H1468M8 168.5H1468M8 152.5H1468M8 216.3H1468" stroke="#0c3713" stroke-width="1"/><path d="M118.5 88V216.6M231.5 88V216.6M343.5 88V216.6M455.5 88V216.6M568.5 88V216.6M680.5 88V216.6M793.5 88V216.6M905.5 88V216.6M1017.5 88V216.6M1130.5 88V216.6M1242.5 88V216.6M1354.5 88V216.6M1467.5 88V216.6" stroke="#0c3713" stroke-width="1"/>
<path d="M16.5 123.9V126.3M17.5 178.7V180.5M22.5 199.1V204M24.5 208.5V209.9M34.5 124.2V126.2M35.5 181.3V189.5M41.5 104.7V109.3M45.5 101.9V104.6M49.5 190.5V194.8M50.5 187.2V189.8M53.5 188.7V194.2M54.5 100.5V104.1M69.5 200.3V206.9M72.5 102.8V105.2M75.5 195.7V200.6M76.5 105.9V109.5M79.5 213.7V215.6M81.5 208V211.9M83.5 89V93.2M87.5 97V108.4M90.5 198.1V199.8M93.5 97.8V102.4M97.5 201.1V208.4M105.5 194.9V207M107.5 196.1V199.7M109.5 198.5V209M111.5 202.4V213.7M114.5 196.4V203M116.5 197.2V199.6M118.5 198.7V201.7M124.5 191.3V194.4M126.5 194.1V195.6M127.5 112.8V114.5M130.5 198.7V203M131.5 203.7V208.5M134.5 89V94.1M136.5 192.4V195.7M139.5 105V112.8M143.5 199V206.3M148.5 199.6V202.7M154.5 99.9V103.1M157.5 201.4V203.1M164.5 203.2V209.8M167.5 158.9V163.2M170.5 109.1V110.9M180.5 98.9V102.6M186.5 97.7V101.1M188.5 201.8V203.3M195.5 94V106.6M210.5 194.4V198M214.5 89V92.2M214.5 203.8V211.5M219.5 101.5V103.5M220.5 102.2V108.4M229.5 89V101.9M231.5 194.1V196.1M236.5 193.3V195.3M237.5 192.3V193.9M238.5 194.9V197.3M240.5 101.9V103.2M241.5 195V198.4M246.5 103V106.3M248.5 106.1V109.6M250.5 194.8V199M251.5 89V91.7M252.5 193.2V195.1M255.5 197.1V200.6M269.5 192.6V202.9M277.5 99.7V102M291.5 186.5V194.4M297.5 195.4V197.1M308.5 103V104.6M313.5 200.3V205M317.5 105V106.3M317.5 194.7V201.8M320.5 205.4V207.3M325.5 203.5V207.1M329.5 109.3V114M333.5 103V104.6M334.5 204.1V205.6M338.5 103.7V106.6M342.5 201.3V206.2M343.5 103.8V105.1M344.5 106.7V110.6M347.5 195.2V200.3M349.5 101V104.6M352.5 95.1V107.3M360.5 101.1V103.3M369.5 89V90.9M376.5 102.2V103.9M380.5 207.4V209M381.5 100.9V104.3M384.5 89.8V100.5M388.5 89V95.1M390.5 209.9V213.9M393.5 90.8V93M405.5 113.7V119.7M410.5 201.3V206.1M420.5 202.8V205.3M422.5 101.3V106.7M424.5 89V90.9M427.5 203.7V207.9M429.5 109V111.2M436.5 209.5V212.2M439.5 212.8V215.6M443.5 103.7V109.2M452.5 213.7V215.6M457.5 199.8V201.6M460.5 200V204.5M483.5 199.1V203M489.5 107.3V109.2M494.5 89V90.9M494.5 199.7V201.8M497.5 204.6V206.6M502.5 97.1V101.2M508.5 201.8V203.8M511.5 98.7V105.6M512.5 105.5V111.2M514.5 194.3V196.5M515.5 98.9V104.9M528.5 104.1V107.5M529.5 97.9V102.1M532.5 193.2V204.5M542.5 203.8V208.4M552.5 108.5V110.6M562.5 197.8V200.3M563.5 197.8V202.5M564.5 98V100.3M567.5 108.5V110.6M573.5 96.2V105M575.5 89V95.3M576.5 102.9V110.9M578.5 112.4V113.8M579.5 103.9V106.3M582.5 199.1V208.1M585.5 103.2V105.1M594.5 202.7V205.4M597.5 103.8V107.4M612.5 96.9V110M612.5 212.4V214M618.5 191V200.2M628.5 92.1V98.4M632.5 102.6V110M639.5 100.2V102.5M641.5 196.4V203M647.5 101.2V106.1M655.5 102.1V110.9M661.5 196.2V200.3M675.5 204V205.8M685.5 203.3V206.5M691.5 101.7V103.1M691.5 209.8V215.6M701.5 205.6V208.4M704.5 188.6V195.3M705.5 109.8V111.7M712.5 207.1V209.3M721.5 101V104.4M722.5 100.2V102.6M730.5 89.6V92M735.5 205.6V207.3M739.5 194.3V200.5M743.5 101.5V104.9M753.5 104.2V109M757.5 109.1V111.7M758.5 103.4V105.4M766.5 89V93M770.5 118.5V119.8M781.5 172.9V180.1M784.5 100.1V102.5M793.5 203.7V208.4M797.5 104V109.1M797.5 201.5V207.4M799.5 193.3V196.2M801.5 108.1V110M804.5 195.6V198M817.5 91.2V97M822.5 104V108.9M823.5 201.3V207.8M826.5 194.1V200.7M827.5 106.5V109.2M827.5 204.1V205.7M832.5 198.2V203.6M842.5 98.7V109M843.5 101.7V105M866.5 200.4V203.5M869.5 202.5V208.3M883.5 205.2V209.8M887.5 196.5V198.1M891.5 98V100.9M900.5 94.5V98.8M900.5 208.8V210.2M902.5 204.1V212M903.5 102.7V104.6M909.5 173.1V180.2M912.5 128.6V132.6M918.5 94.1V105M932.5 89V98.8M932.5 213.1V215.6M933.5 201.8V205.4M937.5 94.6V98.2M942.5 197.1V199.2M948.5 99.6V102.7M949.5 193.7V197.1M956.5 103.9V105.8M959.5 92.6V99.1M976.5 108.6V110.2M980.5 91.9V97.5M980.5 202.5V206.5M981.5 96.1V97.9M983.5 100V108.2M987.5 204.1V207.7M990.5 204.5V206.3M994.5 203.7V206.4M996.5 197.6V200.6M998.5 201.3V202.8M999.5 194.5V196M1004.5 106.2V109.2M1005.5 198.3V209.7M1010.5 194.2V212.6M1014.5 194.9V198.3M1022.5 203.4V206.8M1024.5 203.7V205.5M1034.5 213.7V215.6M1039.5 180.8V184M1043.5 132.2V141.3M1043.5 160.8V166.2M1056.5 89V100M1066.5 101.6V103M1071.5 197.6V200.6M1076.5 95.4V98.7M1078.5 198.1V203.5M1080.5 207.9V210M1082.5 98.9V105.3M1084.5 206.3V215.6M1091.5 200.7V205.3M1101.5 102.2V103.9M1106.5 89V95.2M1106.5 203.5V206.7M1114.5 213.7V215.6M1123.5 102.8V104.3M1131.5 97.9V101.2M1135.5 92.2V94.6M1140.5 107.3V109.2M1143.5 98.1V99.5M1155.5 89.3V103.7M1155.5 203.9V206.2M1179.5 98.9V100.2M1179.5 213.7V215.6M1185.5 165.6V169.2M1188.5 133.1V139.1M1193.5 103.9V112.5M1202.5 168.4V174.2M1205.5 173.3V184.8M1221.5 125.3V126.7M1223.5 174.6V178.3M1231.5 197.5V205.5M1241.5 89.5V96.5M1247.5 89V90.9M1250.5 91.3V106.7M1251.5 103.7V108M1251.5 213.1V215.6M1254.5 102.7V107.2M1255.5 103.3V104.9M1259.5 206.5V210.7M1269.5 204.9V207.9M1272.5 105.5V106.8M1277.5 205.1V209.9M1282.5 199.7V202.2M1283.5 93.5V107.9M1300.5 110.9V112.2M1300.5 189V190.8M1310.5 92.3V96.9M1315.5 213.7V215.6M1318.5 188.7V196.5M1321.5 200.7V206.1M1331.5 110.8V113.4M1332.5 100.6V104.9M1335.5 89V91.8M1337.5 213.7V215.6M1344.5 197.2V199.4M1349.5 197.8V209M1353.5 201.9V204.2M1355.5 206.5V208.3M1361.5 169.4V170.8M1371.5 100.4V105.8M1373.5 206.3V208M1380.5 197.5V199.9M1381.5 89V100.9M1382.5 210.6V212.9M1385.5 209.7V215.6M1388.5 201.2V202.6M1390.5 100V104.7M1398.5 94.7V100.6M1400.5 98.5V102.4M1405.5 207.8V209.8M1408.5 96.1V110.4M1415.5 199.9V202M1417.5 198.3V200.4M1422.5 105.1V107.4M1430.5 99.9V102.1M1440.5 104.4V106.7M1447.5 102.7V104.4M1453.5 200.8V210.1M1456.5 96.8V98.4M1456.5 194.9V197.1M1465.5 175V176.7" stroke="#3f6fc4" stroke-width="1"/>
<path d="M8.5 135.1V168M9.5 126.4V172.3M10.5 131.5V174.5M11.5 128.5V174.2M12.5 133.9V173.2M13.5 133.2V171.1M14.5 128.2V176M15.5 130.9V170.6M16.5 126.3V170.9M17.5 128.2V178.7M18.5 128.9V177.5M19.5 126.6V174.7M20.5 129.1V174.1M21.5 131.4V172.8M22.5 101.9V199.1M23.5 103.7V195.3M24.5 99.1V208.5M25.5 105.9V204.1M26.5 106V194.4M27.5 111.4V206.1M28.5 108.9V195.8M29.5 109.6V194.4M30.5 103.9V194.9M31.5 109.5V200.9M32.5 105.9V202.6M33.5 109.4V190.6M34.5 126.2V182.9M35.5 124.6V181.3M36.5 115V193.7M37.5 98.3V195.1M38.5 110.7V198.9M39.5 111.2V208M40.5 105.2V199.6M41.5 109.3V199.1M42.5 110.4V201.8M43.5 103.4V200.1M44.5 102.2V196.7M45.5 104.6V198.6M46.5 113.2V191.3M47.5 112.7V189.4M48.5 101.5V193.9M49.5 109.7V190.5M50.5 112.6V187.2M51.5 119.7V189.5M52.5 119.1V193.5M53.5 118.8V188.7M54.5 104.1V205.6M55.5 109.4V190M56.5 111.7V194.1M57.5 116V195.6M58.5 113.7V195.1M59.5 111.3V190.5M60.5 105V183.9M61.5 111.6V185.1M62.5 112.5V184.2M63.5 104.5V189.6M64.5 105.1V195.1M65.5 97.9V189.6M66.5 113.4V195M67.5 111.5V202M68.5 103.6V200.8M69.5 106.6V200.3M70.5 103.9V198M71.5 105.7V191.8M72.5 105.2V191.5M73.5 95V198.1M74.5 103.9V194.7M75.5 103.1V195.7M76.5 109.5V194.9M77.5 110.6V199.9M78.5 107.5V194.9M79.5 107V213.7M80.5 100.4V205.7M81.5 98.1V208M82.5 107.8V207.7M83.5 93.2V201.6M84.5 104.9V203.3M85.5 109.1V197.7M86.5 108.7V199.2M87.5 108.4V200.7M88.5 99.5V202.9M89.5 101.4V209M90.5 103.6V198.1M91.5 112.1V210.8M92.5 109.1V200.3M93.5 102.4V198.7M94.5 109.2V206.5M95.5 97.7V198.6M96.5 97.7V201.5M97.5 105.7V201.1M98.5 100.1V198.4M99.5 104V201.6M100.5 104.8V201.8M101.5 110.8V193M102.5 113.9V188.7M103.5 118.4V191.5M104.5 109.1V185.3M105.5 110.9V194.9M106.5 94.7V194.2M107.5 106V196.1M108.5 96.8V195.8M109.5 110.7V198.5M110.5 109.8V206.1M111.5 103.5V202.4M112.5 97V199M113.5 107.3V207.3M114.5 110V196.4M115.5 100.8V213.7M116.5 108.2V197.2M117.5 104.2V198.1M118.5 106.3V198.7M119.5 103.1V201.4M120.5 98.7V201.5M121.5 103.6V197.5M122.5 107.7V197.5M123.5 109.6V207.4M124.5 111.4V191.3M125.5 106.4V197.3M126.5 103.8V194.1M127.5 114.5V201.8M128.5 108.3V194.9M129.5 109V198.4M130.5 99.3V198.7M131.5 112.3V203.7M132.5 111.1V199.7M133.5 109.5V213.7M134.5 94.1V213.7M135.5 108.8V196.8M136.5 93.2V192.4M137.5 110.6V190.8M138.5 106.8V190.3M139.5 112.8V200.9M140.5 97.5V199.8M141.5 102.9V198.4M142.5 109V207.2M143.5 104.9V199M144.5 104.8V207.8M145.5 97.5V199.8M146.5 94.1V196.4M147.5 90.9V199.6M148.5 105.9V199.6M149.5 95V205.2M150.5 103.4V195.1M151.5 106.9V211.9M152.5 95.3V200M153.5 101.7V193.8M154.5 103.1V195.9M155.5 101.4V192.6M156.5 101.6V198.3M157.5 106.7V201.4M158.5 107.9V201.7M159.5 104.6V193.3M160.5 109.4V201.9M161.5 113.7V192.7M162.5 109.7V198.8M163.5 108.8V194.4M164.5 108.2V203.2M165.5 112.5V193.9M166.5 129.3V173M167.5 143.7V158.9M168.5 151V153.7M170.5 110.9V213.7M171.5 108.9V195.6M172.5 110.2V201.7M173.5 104.7V199.5M174.5 104V201.7M175.5 103V194.3M176.5 107.7V193.3M177.5 101.2V193.4M178.5 104.5V199M179.5 106.3V196.3M180.5 102.6V194.5M181.5 109.6V193.1M182.5 102.9V198.2M183.5 109.9V203.2M184.5 108.4V197.3M185.5 110.7V205.2M186.5 101.1V207.3M187.5 108.5V198.8M188.5 106.6V201.8M189.5 111.1V199.3M190.5 109.9V198.6M191.5 104.6V196.7M192.5 90.9V213.7M193.5 102.6V202.7M194.5 99.6V200.4M195.5 106.6V194.9M196.5 106V199.8M197.5 94.7V202.4M198.5 105.1V199.7M199.5 107V205.7M200.5 104.1V197.3M201.5 104.8V197.2M202.5 111.7V203.2M203.5 101V195.7M204.5 112.8V210.3M205.5 101.9V208.7M206.5 109.6V200.4M207.5 112.1V213.5M208.5 102.5V200.8M209.5 112.8V202.6M210.5 109.2V194.4M211.5 111.7V194.9M212.5 105.3V202M213.5 105.4V200.9M214.5 92.2V203.8M215.5 105.2V201.9M216.5 100.7V197.1M217.5 102.2V205.2M218.5 111.5V200M219.5 103.5V197.8M220.5 108.4V193.6M221.5 109.8V204.8M222.5 104.4V196.4M223.5 111.2V196.8M224.5 111.4V213.7M225.5 112V197M226.5 100.2V208.7M227.5 92.5V201M228.5 90.9V200.1M229.5 101.9V201.3M230.5 108.5V203M231.5 108.7V194.1M232.5 111.6V203.6M233.5 111V193.9M234.5 112.4V199.1M235.5 104.6V200.9M236.5 107.1V193.3M237.5 106V192.3M238.5 107.4V194.9M239.5 110.4V199.4M240.5 103.2V195.3M241.5 107.7V195M242.5 105.5V198M243.5 104.8V191.9M244.5 105V196.4M245.5 94.7V193.6M246.5 106.3V199.4M247.5 98.4V189M248.5 109.6V192.3M249.5 90.9V190.8M250.5 97.2V194.8M251.5 91.7V198.1M252.5 110.3V193.2M253.5 102.2V193.1M254.5 110.2V191M255.5 100.4V197.1M256.5 114.3V213.7M257.5 104.7V193.5M260.5 107.1V194.2M261.5 108.3V197.9M262.5 103.8V196.2M263.5 110V191.9M264.5 108.2V192.7M265.5 106V190.6M266.5 111.7V203.1M267.5 95.8V194.7M268.5 107.4V194.2M269.5 114V192.6M270.5 105.1V198M271.5 108.4V201.3M272.5 114.5V196.9M273.5 107.1V205.2M274.5 96V193.7M275.5 107.2V205M276.5 92.6V195.5M277.5 102V194.5M278.5 103.7V207.4M279.5 107.8V197.9M280.5 109.3V194.1M281.5 107.2V197M282.5 105.5V196M283.5 111.9V203M284.5 108.9V197.8M285.5 110.1V201M286.5 107.8V194.5M287.5 112.3V200.6M288.5 107.2V195.6M289.5 112.2V188.5M290.5 107.6V193.6M291.5 114.3V186.5M292.5 111.8V199.8M293.5 115.2V191.8M294.5 113.7V194.4M295.5 106.3V195.4M296.5 109.6V201.2M297.5 102.3V195.4M298.5 95.9V197M299.5 97.2V203.3M300.5 100.9V196.5M301.5 108.3V202M302.5 104.7V206.5M303.5 108.1V194.6M304.5 103.4V192.6M305.5 108.2V204.7M306.5 91.7V206.7M307.5 108.9V193.8M308.5 104.6V191.9M309.5 112V195.8M310.5 109.9V192.6M311.5 107.8V199.9M312.5 108.2V197M313.5 107V200.3M314.5 106.1V195.8M315.5 101V197.3M316.5 110V203.8M317.5 106.3V194.7M318.5 105.2V207.1M319.5 105.7V198.8M320.5 103.5V205.4M321.5 94.7V196.5M322.5 100.3V200.6M323.5 106.3V202.1M324.5 92V199.5M325.5 112V203.5M326.5 110V192.1M327.5 112V191.7M328.5 110.8V200.8M329.5 114V204.3M330.5 102.7V192.6M331.5 108.6V203.2M332.5 97.7V204M333.5 104.6V198.7M334.5 101.8V204.1M335.5 104.4V198.3M336.5 102.9V199.2M337.5 109V200M338.5 106.6V208.5M339.5 109.5V195.6M340.5 105.9V204.3M341.5 101.9V198.1M342.5 104.3V201.3M343.5 105.1V194.6M344.5 110.6V203.7M345.5 105.9V213.7M346.5 106.8V212.6M347.5 107.5V195.2M349.5 104.6V200.8M350.5 110.3V197M351.5 107.6V202.4M352.5 107.3V195.7M353.5 102.4V201.6M354.5 93.3V202.2M355.5 105.4V195.3M356.5 101.4V193.1M357.5 98.1V201.5M358.5 110.2V194.7M359.5 104.9V208M360.5 103.3V206.6M361.5 106.7V205.4M362.5 109.7V195M363.5 119.7V195.9M364.5 121.8V187.9M365.5 109.1V192.6M366.5 106.9V200.5M367.5 98.9V204.9M368.5 90.9V210M369.5 90.9V205.5M370.5 93.5V213.7M371.5 90.9V203.8M372.5 101.8V205.9M373.5 90.9V207.2M374.5 99.6V203.3M375.5 102.3V213.3M376.5 103.9V213.7M377.5 104.4V204.7M378.5 99.7V201.9M379.5 99.9V207.9M380.5 95.7V207.4M381.5 104.3V212.2M382.5 94.6V204.7M383.5 98V204.7M384.5 100.5V210.3M385.5 97.8V203.9M386.5 101.8V212.6M387.5 96V212.4M388.5 95.1V213.7M389.5 92.6V211.5M390.5 101V209.9M391.5 101.4V210.5M392.5 97.8V211.4M393.5 93V209.8M394.5 90.9V205.6M395.5 100.8V213.7M396.5 93.9V206.9M397.5 97.1V208.3M398.5 90.9V213.7M399.5 95.8V207.3M400.5 97.1V200.7M401.5 93.3V202.6M402.5 98.9V213.7M403.5 108.6V202.2M404.5 119.8V182.9M405.5 119.7V183M406.5 110V194.5M407.5 90.9V201.8M408.5 90.9V212.5M409.5 99.7V200.5M410.5 91.8V201.3M411.5 104.2V202.8M412.5 100.1V201.2M413.5 101V207M414.5 95.7V212.8M415.5 94.6V201M416.5 105.9V203.3M417.5 99V206.1M418.5 101.7V201.1M419.5 109.9V209.9M420.5 93.4V202.8M421.5 110.4V200.9M422.5 106.7V211.2M423.5 96.9V203.3M424.5 90.9V201.6M425.5 94.1V203.9M426.5 108.9V203.8M427.5 108.2V203.7M428.5 108.2V200.7M429.5 111.2V201.9M430.5 99.3V190.9M431.5 104.9V204.2M432.5 99.5V201.5M433.5 102.9V196.6M434.5 98.7V196.3M435.5 95.3V201.4M436.5 102.1V209.5M437.5 106.8V201.1M438.5 104.3V207.3M439.5 110V212.8M440.5 110.5V202.2M441.5 104.2V201.5M442.5 109.9V197.1M443.5 109.2V197.7M444.5 106.7V197.5M445.5 101.6V197.5M446.5 108.5V211.5M447.5 91.7V208.1M448.5 103.9V209.2M449.5 99.3V200.4M450.5 98.7V200.7M451.5 99.5V199.3M452.5 105.1V213.7M453.5 101.7V202.6M454.5 103.5V196.6M455.5 101.7V207.8M456.5 105V196.1M457.5 101.5V199.8M458.5 103.1V196.9M459.5 108.1V213.7M460.5 103.4V200M461.5 96.2V213.7M462.5 108.6V213.7M463.5 104.5V211M464.5 104.7V213.7M465.5 109.4V193.9M466.5 109.5V195.8M467.5 119.3V192.7M468.5 119.6V181.6M469.5 126.2V178.3M470.5 132.8V172.5M471.5 136.2V167M472.5 138.5V167.5M473.5 141.5V163.6M474.5 144V159.8M475.5 146.3V158.5M476.5 147.7V156.8M477.5 148.6V155.8M478.5 149.6V155M479.5 150.6V153.8M480.5 151.5V153.2M483.5 101.6V199.1M484.5 97.5V202.8M485.5 103.2V202M486.5 106.4V208.3M487.5 101.9V196.9M488.5 102.4V200M489.5 109.2V201.9M490.5 104.3V193.3M491.5 108.2V209.2M492.5 106.2V195.9M493.5 109.4V194.3M494.5 90.9V199.7M495.5 109.1V199M496.5 100.4V196.2M497.5 105V204.6M498.5 104.3V194.4M499.5 93.6V195.1M500.5 96.9V203.2M501.5 101.6V202.4M502.5 101.2V198.8M503.5 103V200.3M504.5 101.5V213.7M505.5 98.9V197.2M506.5 91.7V202M507.5 111V201.5M508.5 97V201.8M509.5 110.9V196.1M510.5 90.9V207.4M511.5 105.6V198.1M512.5 111.2V198M513.5 101.8V191.3M514.5 110.1V194.3M515.5 104.9V191.7M516.5 103.7V198M517.5 107.9V194M518.5 107.4V193.8M519.5 107.6V194M520.5 101.9V197.1M521.5 107V197.3M522.5 105.6V213.7M523.5 105.5V197.5M524.5 104.3V202.8M525.5 92.4V203.6M526.5 102.1V199.6M527.5 101.6V195.3M528.5 107.5V196.4M529.5 102.1V199.5M530.5 94.6V196M531.5 98.5V194M532.5 100V193.2M533.5 97.9V193.5M534.5 93.1V202.7M535.5 95V204.4M536.5 92.3V196.4M537.5 106.6V198.2M538.5 98.3V204.1M539.5 107.1V202.9M540.5 110.8V199.7M541.5 109.3V195.8M542.5 106.3V203.8M543.5 110.8V200M544.5 101.9V196.4M545.5 108.6V194.6M546.5 101.4V196.8M547.5 104V204.8M548.5 107.3V194.1M549.5 113.6V196.7M550.5 111.2V197.9M551.5 112.7V189M552.5 110.6V202.6M553.5 106.9V204.9M554.5 103.2V196.8M555.5 104V198.9M556.5 104.5V197.2M557.5 107.7V193.9M558.5 94.7V200.6M559.5 108.5V195.9M560.5 106.2V193.7M561.5 108.4V202.3M562.5 99.4V197.8M563.5 105.9V197.8M564.5 100.3V194.2M565.5 109.2V197.8M566.5 97.1V198.1M567.5 110.6V199.5M568.5 100.9V202.2M569.5 110.7V200.7M570.5 97.4V202.5M571.5 104.6V200M572.5 93V202.7M573.5 105V213.7M574.5 102.7V198M575.5 95.3V195.9M576.5 110.9V205.2M577.5 90.9V201.1M578.5 113.8V200.7M579.5 106.3V202.4M580.5 109.6V199.6M581.5 101.3V194.9M582.5 94.4V199.1M583.5 97.9V194.1M584.5 100.8V201.2M585.5 105.1V201.6M586.5 104.1V201.2M587.5 108.4V198.3M588.5 105.6V204.6M589.5 104.6V201.8M590.5 109V213.7M591.5 104V209.5M592.5 106.2V207M593.5 106.9V199.5M594.5 110.3V202.7M597.5 107.4V198.6M598.5 110.9V195.2M599.5 137.1V170.3M600.5 135V169.3M601.5 112.7V199.8M602.5 109.1V205.2M603.5 96.4V211M604.5 106.9V195.8M605.5 103.2V204.3M606.5 96.4V205.1M607.5 107.6V207.3M608.5 109.9V203.1M609.5 108.9V200.6M610.5 109.3V198.8M611.5 108.1V194.5M612.5 110V212.4M613.5 107V200.5M614.5 102.5V190.5M615.5 105.9V197.8M616.5 112.5V200.6M617.5 110.9V200M618.5 109V191M619.5 112.6V193.1M620.5 107.7V213.7M621.5 103.7V193.3M622.5 106.8V199.5M623.5 90.9V198.1M624.5 92.9V203.5M625.5 105V200.8M626.5 107.3V199.6M627.5 109.3V191.9M628.5 98.4V194.9M629.5 106.6V203.2M630.5 95.5V205.4M631.5 96.9V195.8M632.5 110V206.4M633.5 100.1V194.7M634.5 102.9V196.3M635.5 106.4V195.8M636.5 108V194.9M637.5 100V199.4M638.5 97.3V198.8M639.5 102.5V192.1M640.5 105.9V195.9M641.5 100.8V196.4M642.5 105.8V211.4M643.5 104.4V208.7M644.5 104.9V207M645.5 95.5V212.9M646.5 97.3V209.6M647.5 106.1V196.1M648.5 100.8V201.2M649.5 105.5V195.6M650.5 109.1V210M651.5 106V195.6M652.5 104.9V203M653.5 105.2V198.5M654.5 105.4V199.5M655.5 110.9V199M656.5 105.6V195.7M657.5 107.3V207.8M658.5 103.5V209.2M659.5 99V192.6M660.5 108.9V190.6M661.5 114.2V196.2M662.5 108.4V195.3M663.5 103.3V193.7M664.5 101.5V197.4M665.5 108.3V195.7M666.5 111.4V197M667.5 97.6V204.1M668.5 104.6V202.1M669.5 105.9V198.6M670.5 108.1V196M671.5 103.3V200.9M672.5 96.8V196M673.5 91.9V202M674.5 108V212.5M675.5 107.3V204M676.5 106.3V194M677.5 111.4V198.8M678.5 96.9V196.9M679.5 103.7V202.4M680.5 107.8V207.8M681.5 104.9V202.1M682.5 105V210.9M683.5 103.3V199.1M684.5 102.9V200.7M685.5 103.7V203.3M686.5 96.9V213.7M687.5 101.4V196.4M688.5 106.9V195.4M689.5 101.6V203.8M690.5 90.9V198.5M691.5 103.1V209.8M692.5 91.8V207.4M693.5 106V198.2M694.5 107.7V200.7M695.5 103.6V207.1M696.5 104.7V203.5M697.5 106.8V194.6M698.5 99.5V203M699.5 96.2V211.5M700.5 99.1V197.9M701.5 101.3V205.6M702.5 110.2V202.8M703.5 110.4V188.1M704.5 115.9V188.6M705.5 111.7V191.9M706.5 105.5V208.9M707.5 108.8V196.7M708.5 104V213.7M709.5 104.5V193.6M710.5 100.2V194.3M711.5 109.3V196.1M712.5 104.2V207.1M713.5 107V206.6M714.5 99.3V201.9M715.5 101.2V201.1M716.5 95.4V196.1M717.5 104.6V202.6M718.5 102.6V213.7M719.5 100.7V206.9M720.5 104.3V213.7M721.5 104.4V202.1M722.5 102.6V196.9M723.5 101V198.1M724.5 97.9V209M725.5 102.9V201.4M726.5 106.2V193.6M727.5 100.5V202.6M728.5 105.6V192.9M729.5 100V198.3M730.5 92V195.6M731.5 103.9V201.6M732.5 98.4V204.2M733.5 105.1V199.3M734.5 105.3V194.4M735.5 103.2V205.6M736.5 109.5V200.1M737.5 108.1V198.1M738.5 102.6V191.8M739.5 105.3V194.3M740.5 111.1V192.3M741.5 107.1V199.9M742.5 104.1V207M743.5 104.9V195.6M744.5 104.7V205.9M745.5 93.5V202.4M746.5 103.6V199.3M747.5 91.1V204.7M748.5 99.2V210M749.5 99.1V213.7M750.5 101.2V197.5M751.5 107.5V203.9M752.5 101.4V201.8M753.5 109V198.2M754.5 108.7V205M755.5 94.9V206.2M756.5 111.9V200.6M757.5 111.7V203.3M758.5 105.4V197.5M759.5 107V204.8M760.5 100.5V195.9M761.5 105.9V203M762.5 101.7V196M763.5 103.7V200.7M764.5 109.6V199.8M765.5 104.9V197.7M766.5 93V198.3M767.5 98.7V213.7M768.5 107.8V199.1M769.5 116.6V199.4M770.5 119.8V191.7M771.5 125.6V179.2M772.5 130.7V179.7M773.5 136.2V171.8M774.5 139.3V166.1M775.5 142.7V161.4M776.5 148.4V156.6M777.5 151.8V152.9M778.5 148.5V156.1M779.5 144V161.6M780.5 140.2V167.5M781.5 135.6V172.9M782.5 130.2V174.5M783.5 105.5V207.5M784.5 102.5V200.1M785.5 103.7V202.4M786.5 101.8V202.1M787.5 109.9V206.8M788.5 98V198.1M789.5 105.2V196.1M790.5 105.7V198.2M791.5 106.3V203.6M792.5 100.2V205.6M793.5 104V203.7M794.5 104.9V204.6M795.5 103.7V212.9M796.5 103.4V210M797.5 109.1V201.5M798.5 114.1V206.2M799.5 111.8V193.3M800.5 101.3V192.2M801.5 110V189.7M802.5 104V203.2M803.5 101.6V205.1M804.5 107.7V195.6M805.5 109V196.2M806.5 107.9V203.7M807.5 106V208.5M808.5 108.6V195.2M809.5 109.4V200.6M810.5 103.6V197.8M811.5 109.2V192.7M812.5 102.1V202.5M813.5 110.1V206.5M814.5 102.4V205.4M815.5 104.9V196.5M816.5 101.8V204.9M817.5 97V198.5M818.5 90.9V213.7M819.5 106.9V199.7M820.5 108.8V203.8M821.5 94.2V196.4M822.5 108.9V199.3M823.5 108.6V201.3M824.5 105.9V194.8M825.5 110.3V210.6M826.5 102.2V194.1M827.5 109.2V204.1M828.5 96V204.3M829.5 94.2V195.7M830.5 105.1V196.7M831.5 106.2V197.9M832.5 110.7V198.2M833.5 114V197.2M834.5 107.7V196.1M835.5 115.4V190.5M836.5 107.8V200.9M837.5 104V191.8M838.5 105.5V195.5M839.5 108.2V193.7M840.5 110V198M841.5 110.8V205.3M842.5 109V203.2M843.5 105V199.8M844.5 105.8V204.7M845.5 106.3V198.8M846.5 108.7V213.7M847.5 99.8V208.7M848.5 109.6V201.4M849.5 100.9V196.2M850.5 101.4V199.4M851.5 106.4V193.3M852.5 103.2V200.2M853.5 104.1V205.9M854.5 108.3V210.2M855.5 105.2V201.2M856.5 105.8V198.9M857.5 108.8V198.7M858.5 107.1V213.2M859.5 106.1V196.6M860.5 111.2V198.8M861.5 100.2V201.3M862.5 106.3V209.8M863.5 105.9V206.3M864.5 99.4V206.1M865.5 103.6V198M866.5 105.2V200.4M867.5 96.6V213.7M868.5 96.2V200.8M869.5 99V202.5M870.5 92.8V208.1M871.5 94.6V202.1M872.5 101.2V202.7M873.5 99.3V204.4M874.5 97.3V206.3M875.5 96.6V197M876.5 107.6V195.3M877.5 103.1V202.1M878.5 105.2V196.9M879.5 95.1V195.9M880.5 102.1V196.1M881.5 96.2V203.1M882.5 95.6V200.9M883.5 100.5V205.2M884.5 97.6V196.1M885.5 106V198.7M886.5 101.2V201.9M887.5 106.4V196.5M888.5 93.8V201.9M889.5 98.8V201.5M890.5 107.4V213.2M891.5 100.9V204.9M892.5 104.6V213.7M893.5 100.9V203.3M894.5 101V197.3M895.5 95.1V196.3M896.5 98.3V210M897.5 104.9V205.5M898.5 95.7V200.3M899.5 103.5V199.5M900.5 98.8V208.8M901.5 99.3V200.5M902.5 103.2V204.1M903.5 104.6V206.6M904.5 93.7V210.1M905.5 132.6V169.9M906.5 135.4V171.7M907.5 134.3V172M908.5 132.7V169.4M909.5 136V173.1M910.5 133.9V170.4M911.5 135V168.7M912.5 132.6V168.6M913.5 134.1V169.7M914.5 134.9V170.2M915.5 135.6V173.1M916.5 133.8V169.2M917.5 100.4V200.6M918.5 105V198M919.5 103.9V213.7M920.5 106.4V208.2M921.5 100.1V200.8M922.5 105.8V212.2M923.5 93.2V199.9M924.5 105.1V207.2M925.5 102.8V205.3M926.5 101.8V200M927.5 100.6V207.7M928.5 105.3V200.5M929.5 104.2V198M930.5 99.3V196.1M931.5 101.4V202.5M932.5 98.8V213.1M933.5 96.4V201.8M934.5 101.2V199.5M935.5 90.9V201.2M936.5 94.8V202.9M937.5 98.2V207.6M938.5 90.9V200.1M939.5 103.8V202.6M940.5 102.4V201.6M941.5 102.8V212.6M942.5 105.7V197.1M943.5 99V203.6M944.5 94.6V207.4M945.5 107.9V205.5M946.5 108.8V196.5M947.5 111.2V199.1M948.5 102.7V200.8M949.5 109V193.7M950.5 114.1V193.1M951.5 109.2V197.3M952.5 114.5V195.1M953.5 103.3V192.7M954.5 102V196.3M955.5 112.3V198.5M956.5 105.8V202.5M957.5 109V197.2M958.5 109.1V201.8M959.5 99.1V210.1M960.5 101.6V198.2M961.5 108.9V213.7M962.5 109.4V209.4M963.5 105.6V202.5M964.5 103.6V204.5M965.5 110.8V206.5M966.5 101.3V201.4M967.5 101V213.7M968.5 102.9V204M969.5 98.9V204.7M970.5 97.4V207.2M971.5 99.4V200M972.5 108.3V203M973.5 107.4V201.5M974.5 105.2V208.9M975.5 103.5V196M976.5 110.2V199.6M977.5 99.8V209.8M978.5 105.8V195.9M979.5 105.5V198.3M980.5 97.5V202.5M981.5 97.9V205M982.5 98.1V198.6M983.5 108.2V210.7M984.5 103V195.6M985.5 101.6V199.7M986.5 106.4V209.3M987.5 107.1V204.1M988.5 95.5V201.5M989.5 92.3V197.7M990.5 108V204.5M991.5 110.5V194.9M992.5 103V213.7M993.5 106.6V200.6M994.5 100.1V203.7M995.5 99.9V204.2M996.5 90.9V197.6M997.5 103.9V203.8M998.5 103V201.3M999.5 99.9V194.5M1000.5 99.3V198.4M1001.5 96V195.4M1002.5 102.2V207.8M1003.5 104.3V193.1M1004.5 109.2V195.9M1005.5 105.5V198.3M1006.5 108.4V198.3M1007.5 109.2V201.3M1008.5 102.3V204.8M1009.5 104.9V194.6M1010.5 110.7V194.2M1011.5 108.9V195.1M1012.5 105.8V195.4M1013.5 111.2V201.6M1014.5 103V194.9M1015.5 101.1V204.4M1016.5 93.4V196.2M1017.5 101.5V198.7M1018.5 108.2V194.2M1019.5 107.2V198.6M1020.5 102.9V202.2M1021.5 108.6V206.9M1022.5 105V203.4M1023.5 106.2V204.5M1024.5 106.2V203.7M1025.5 113.2V201.9M1026.5 110V202.4M1027.5 94.3V213.7M1028.5 106.4V198.5M1029.5 111.1V205.1M1030.5 107.2V211.9M1031.5 98.8V195.7M1032.5 110.4V196.7M1033.5 101.3V200.8M1034.5 97.8V213.7M1035.5 90.9V198.2M1036.5 105.9V206.9M1037.5 108.6V194.6M1038.5 108.4V200.6M1039.5 118.3V180.8M1040.5 128.5V175.3M1041.5 134.7V167M1042.5 140.5V164.3M1043.5 141.3V160.8M1044.5 145.1V158.7M1045.5 147.1V156.8M1046.5 147.9V155.9M1047.5 149.4V154.6M1048.5 150.3V154.5M1049.5 151.1V153.5M1050.5 151.6V153.2M1051.5 151.8V152.7M1054.5 101.8V199.7M1055.5 93V213.7M1056.5 100V207.9M1057.5 98.2V202M1058.5 102.7V196.1M1059.5 103.3V213.7M1060.5 96.9V208.1M1061.5 103.3V203M1062.5 98V202.7M1063.5 102.9V203.7M1064.5 94.3V207.6M1065.5 90.9V199.4M1066.5 103V205.5M1067.5 96.2V203.9M1068.5 105.3V205.5M1069.5 104.7V197.2M1070.5 102.2V195.5M1071.5 102.7V197.6M1072.5 100.2V202.3M1073.5 99.3V198.8M1074.5 102V199.5M1075.5 104.7V207.9M1076.5 98.7V202.3M1077.5 102.1V199.1M1078.5 104.6V198.1M1079.5 103.1V199.3M1080.5 96.5V207.9M1081.5 105V202M1082.5 105.3V202.8M1083.5 107.3V198.9M1084.5 101.1V206.3M1085.5 109.6V201.4M1086.5 107.8V199.4M1087.5 94.2V213.7M1088.5 103.5V203.3M1089.5 107V210.4M1090.5 102.1V203.1M1091.5 104.2V200.7M1092.5 100.7V213.7M1093.5 103.2V201.3M1094.5 94.3V196.8M1095.5 102.8V207.8M1096.5 94.3V197M1097.5 97.7V198.4M1098.5 101.7V201M1099.5 103.8V203.5M1100.5 90.9V200.9M1101.5 103.9V200.9M1102.5 100.9V201.4M1103.5 104.9V198.8M1104.5 104.7V198.3M1105.5 90.9V203.3M1106.5 95.2V203.5M1107.5 97.4V199.7M1108.5 97.9V198.6M1109.5 105.1V200.2M1110.5 107.2V211.7M1111.5 103.2V204.1M1112.5 100.6V197.4M1113.5 90.9V207.2M1114.5 99.5V213.7M1115.5 100.8V210.2M1116.5 92V212.6M1117.5 97.7V210.3M1118.5 107.2V203.5M1119.5 99V198.4M1120.5 104.6V202.5M1121.5 106.9V196.4M1122.5 106.8V208.8M1123.5 104.3V202.3M1124.5 91.5V208.3M1125.5 90.9V207M1126.5 95.8V213.7M1127.5 102.2V203.5M1128.5 98.9V204.5M1129.5 96.3V213.7M1130.5 101.4V208.7M1131.5 101.2V202.5M1132.5 101.6V204.6M1133.5 99V213.7M1134.5 103.4V209.4M1135.5 94.6V201.5M1136.5 100.7V204.6M1137.5 106.7V200.2M1138.5 103.6V205.2M1139.5 99.2V200.2M1140.5 109.2V196.7M1141.5 91.5V198.7M1142.5 105.2V200.7M1143.5 99.5V197.8M1144.5 95.8V211.2M1145.5 104.6V202M1146.5 106.1V201.3M1147.5 106.2V200.5M1148.5 90.9V197.1M1149.5 90.9V211.4M1150.5 107V199.6M1151.5 101.8V197M1152.5 104.9V201M1153.5 107.2V200.6M1154.5 102.9V200.6M1155.5 103.7V203.9M1156.5 105.8V200M1157.5 103.4V198.3M1158.5 102.9V204.8M1159.5 104.8V203M1160.5 107.6V202.3M1161.5 111V192.5M1162.5 102.8V204M1163.5 115.9V192M1164.5 112.3V192.1M1165.5 117.1V189.3M1166.5 114.3V187.8M1167.5 106.8V194.2M1168.5 110.1V194.8M1169.5 99V196.5M1170.5 110.9V198.2M1171.5 109.1V196.5M1172.5 110.8V191.9M1173.5 104.3V192.3M1174.5 112.7V195.7M1175.5 107.8V191M1176.5 99.4V198.8M1177.5 108.3V197.1M1178.5 101V213.7M1179.5 100.2V213.7M1181.5 137.9V167.3M1182.5 134.3V167.9M1183.5 135.5V166.4M1184.5 139.6V168.7M1185.5 136.1V165.6M1186.5 139.1V166.9M1187.5 139.1V166.6M1188.5 139.1V164.9M1189.5 137.7V166.2M1190.5 139.8V164.8M1191.5 111.8V194.4M1192.5 104.8V192M1193.5 112.5V195.5M1194.5 106.4V193.8M1195.5 111.9V200M1196.5 107.4V192.4M1197.5 109.8V195.7M1198.5 104.9V199.2M1199.5 108.4V201.7M1200.5 131.8V170.2M1201.5 136.9V167.8M1202.5 136V168.4M1203.5 135.4V169.4M1204.5 136.1V170.1M1205.5 135.6V173.3M1206.5 135V169.3M1207.5 135.6V172.2M1208.5 134.7V170.7M1209.5 134V173.1M1210.5 134.7V171.8M1211.5 132.8V169.6M1212.5 133.3V170M1213.5 132.5V170M1214.5 132.7V173M1215.5 133.7V170.7M1216.5 131.1V169.9M1217.5 129.7V172.1M1218.5 130.8V170.6M1219.5 129.2V173.1M1220.5 129.7V171.5M1221.5 126.7V171.4M1222.5 132.3V172.3M1223.5 126.1V174.6M1224.5 131.3V175.3M1225.5 125.2V176M1226.5 127V177.4M1227.5 93.8V203.8M1228.5 100.3V204.5M1229.5 98.9V194.5M1230.5 109.8V191.4M1231.5 106.1V197.5M1232.5 106.9V190.5M1233.5 112V191.7M1234.5 108.7V193.7M1235.5 103.4V198.3M1236.5 92.3V208.8M1237.5 106.3V207.9M1238.5 101.6V209M1239.5 99.9V202.5M1240.5 94.3V206.4M1241.5 96.5V203.8M1242.5 103.2V213.7M1243.5 107.2V201.5M1244.5 108.5V213.7M1245.5 108.2V203.5M1246.5 105.7V202.9M1247.5 90.9V211.2M1248.5 99.9V198.7M1249.5 90.9V206.9M1250.5 106.7V209.7M1251.5 108V213.1M1252.5 100.5V197.2M1253.5 105.3V207.3M1254.5 107.2V204M1255.5 104.9V202.9M1256.5 102.2V207.3M1257.5 101.2V204.9M1258.5 104.5V202.2M1259.5 101.2V206.5M1260.5 101.9V200.7M1261.5 108.3V195.9M1262.5 103.6V198.3M1263.5 106.3V203.5M1264.5 99.5V201.2M1265.5 107V209.5M1266.5 97V199.9M1267.5 108.8V207.1M1268.5 107.5V206.2M1269.5 95.7V204.9M1270.5 102.1V210.4M1271.5 104.6V210M1272.5 106.8V211.9M1273.5 95.8V203.6M1274.5 96.6V207.2M1275.5 102V194M1276.5 105.3V196.9M1277.5 95.3V205.1M1278.5 101.3V201.3M1279.5 105.2V202.3M1280.5 103.9V197.8M1281.5 96.2V198.6M1282.5 93.6V199.7M1283.5 107.9V201.8M1284.5 107.8V201.2M1285.5 97.7V198.5M1286.5 99.3V209M1287.5 100.5V202.2M1288.5 105.4V207.6M1289.5 108.7V204.2M1290.5 104.3V201.9M1291.5 108.5V197.4M1292.5 106.3V195.5M1293.5 101.8V201.2M1294.5 100.5V195.4M1295.5 105.7V200.7M1296.5 101.5V203.5M1297.5 100.6V197.2M1298.5 108.6V192M1299.5 111.9V199.5M1300.5 112.2V189M1301.5 98.2V193.3M1302.5 106.4V211.7M1303.5 109.9V202.5M1304.5 105.4V204.6M1305.5 111.1V192.9M1306.5 107.1V192.6M1307.5 105.5V198.3M1308.5 96.7V200.1M1309.5 101.9V198.2M1310.5 96.9V200.3M1311.5 101.1V208.1M1312.5 101.7V196.8M1313.5 105V196.2M1314.5 94.2V200.5M1315.5 103.1V213.7M1316.5 109.5V192M1317.5 92.2V190M1318.5 102.2V188.7M1319.5 102.6V190.1M1320.5 107.4V210.2M1321.5 108.7V200.7M1322.5 111.2V190.7M1323.5 102.1V191.1M1324.5 103.9V191.3M1325.5 113.2V191.7M1326.5 106.8V194.5M1327.5 114.4V202.2M1328.5 114V195.3M1329.5 113.5V188.7M1330.5 116.4V208.5M1331.5 113.4V195.6M1332.5 104.9V201.6M1333.5 106.8V198.7M1334.5 107.9V195.3M1335.5 91.8V199M1336.5 106.9V204.8M1337.5 107.5V213.7M1338.5 105.5V201.4M1339.5 103.2V202.1M1340.5 105.1V202.9M1341.5 106.9V209.3M1342.5 99.2V202.6M1343.5 110.1V204.4M1344.5 97.8V197.2M1345.5 103.7V200.8M1346.5 90.9V206.2M1347.5 102.9V202.8M1348.5 100.3V203.3M1349.5 105.9V197.8M1350.5 103.9V193.3M1351.5 106.2V198.3M1352.5 101.9V197.9M1353.5 102.1V201.9M1354.5 101.9V206.5M1355.5 112.4V206.5M1356.5 109.2V206M1357.5 112.5V195.3M1358.5 135.1V176.1M1359.5 133.3V173.8M1360.5 130.3V170.7M1361.5 134.8V169.4M1362.5 131.9V168.4M1363.5 135.4V166.9M1364.5 136.7V167.1M1365.5 139.6V164.8M1366.5 139.8V163M1367.5 143.1V162.6M1368.5 146.5V158.3M1369.5 149.2V155.5M1370.5 152V152.6M1371.5 105.8V205M1372.5 92.3V196.6M1373.5 106.4V206.3M1374.5 103.4V197.4M1375.5 100.5V197M1376.5 99.1V201.4M1377.5 104.9V198.3M1378.5 104.1V202.3M1379.5 99.7V206M1380.5 98.2V197.5M1381.5 100.9V202.3M1382.5 107.5V210.6M1383.5 106.7V199.7M1384.5 98.2V201.6M1385.5 96.8V209.7M1386.5 102.8V209.1M1387.5 101.1V201.5M1388.5 98.5V201.2M1389.5 102.8V203.3M1390.5 104.7V209M1391.5 90.9V208.8M1392.5 104.5V201.8M1393.5 97.1V201.4M1394.5 94.5V208.9M1395.5 97.1V201.6M1396.5 102.7V202.3M1397.5 90.9V200.9M1398.5 100.6V213.7M1399.5 107.5V202.4M1400.5 102.4V203.8M1401.5 90.9V209.7M1402.5 93.8V203.6M1403.5 111V204M1404.5 103.1V205.6M1405.5 95.6V207.8M1406.5 109.3V202M1407.5 107.3V199.1M1408.5 110.4V203.3M1409.5 110.4V207.5M1410.5 102.6V199.4M1411.5 111V206.6M1412.5 102.1V200.7M1413.5 100.7V205.9M1414.5 100.2V204M1415.5 101.1V199.9M1416.5 106.5V197.6M1417.5 98.9V198.3M1418.5 107.4V201.4M1419.5 105.3V194.3M1420.5 105.9V203.2M1421.5 100.4V205.1M1422.5 107.4V206.4M1423.5 107.6V203.6M1424.5 109.2V198.2M1425.5 99.3V202.8M1426.5 95.5V210.7M1427.5 105.7V199.4M1428.5 103.1V212.8M1429.5 107.2V198.2M1430.5 102.1V197.3M1431.5 93.9V210.3M1432.5 101.5V198.2M1433.5 104.5V197M1434.5 108.5V196.2M1435.5 100.8V198.5M1436.5 103.7V196.6M1437.5 101.1V199.2M1438.5 103.3V204M1439.5 106.7V203M1440.5 106.7V193.8M1441.5 96.9V200.5M1442.5 97.3V198.5M1443.5 102.3V200.3M1444.5 101V206.1M1445.5 103V201.8M1446.5 104.9V200.3M1447.5 104.4V210.1M1448.5 102.8V213.7M1449.5 90.9V197.4M1450.5 93V211.1M1451.5 107V201.9M1452.5 104.8V202.1M1453.5 107.4V200.8M1454.5 104.3V205.7M1455.5 107.7V199.7M1456.5 98.4V194.9M1457.5 108.3V197.7M1458.5 108.6V197.5M1459.5 104.4V206.6M1460.5 106.3V197.1M1461.5 110.9V202M1462.5 102.3V200M1463.5 112.9V196.9M1464.5 119.7V183.1M1465.5 131.5V175" stroke="#45c8a5" stroke-width="1"/>
<path d="M8 106.5H1468M8 197.5H1468M8 120.5H1468M8 184.5H1468M8 136.5H1468M8 168.5H1468M8 152.5H1468" stroke="#2a9a6c" stroke-width="1" opacity=".26"/>
</svg>
<div class="b" style="left:6.3px;top:88px;width:1.6px;height:129px;background:#a81414;"></div>
<div class="b" style="left:6.3px;top:225px;width:1.6px;height:236px;background:#b59a9a;"></div>
<svg class="b" style="left:16.3px;top:88.8px" width="11" height="11"><rect x="0.5" y="0.5" width="9.4" height="9.4" fill="#4a4a4a" stroke="#cfcfcf"/><path d="M1 1h8.4L1 9.4z" fill="#d6d6d6"/></svg>
<svg class="b" style="left:1447.8px;top:88.8px" width="11" height="11"><rect x="0.5" y="0.5" width="9.4" height="9.4" fill="#c4c4c4" stroke="#bdbdbd"/><path d="M1 1L9.4 9.4H1z" fill="#4a4a4a"/></svg>
<div class="b" style="left:1468.3px;top:86.8px;width:61.3px;height:375.6px;background:#171717;"></div>
<div class="b" style="left:1468.3px;top:88px;width:59.7px;height:128.8px;background:#252525;"></div>
<svg class="b" style="left:0;top:0" width="1480" height="218" shape-rendering="crispEdges"><path d="M1468.8 88.5h1.6M1468.8 216.5h1.6M1468.8 94.5h1.6M1468.8 209.5h1.6M1468.8 101.5h1.6M1468.8 203.5h1.6M1468.8 106.5h3.6M1468.8 197.5h3.6M1468.8 111.5h1.6M1468.8 192.5h1.6M1468.8 116.5h1.6M1468.8 188.5h1.6M1468.8 120.5h3.6M1468.8 184.5h3.6M1468.8 123.5h1.6M1468.8 181.5h1.6M1468.8 126.5h1.6M1468.8 177.5h1.6M1468.8 129.5h1.6M1468.8 175.5h1.6M1468.8 131.5h1.6M1468.8 172.5h1.6M1468.8 134.5h1.6M1468.8 170.5h1.6M1468.8 136.5h3.6M1468.8 168.5h3.6M1468.8 152.5h3.6" stroke="#9a9a9a" stroke-width="1"/></svg>
<span class="t" style="left:1475.2px;top:88.33px;font-size:9.3px;line-height:12.09px;color:#ababab;transform:scaleX(0.905);">dB</span>
<span class="t" style="left:1475.4px;top:101.23px;font-size:9.3px;line-height:12.09px;color:#ababab;transform:scaleX(1.04);">-3</span>
<span class="t" style="left:1475.4px;top:114.53px;font-size:9.3px;line-height:12.09px;color:#ababab;transform:scaleX(1.04);">-6</span>
<span class="t" style="left:1475.4px;top:130.63px;font-size:9.3px;line-height:12.09px;color:#ababab;transform:scaleX(0.938);">-12</span>
<span class="t" style="left:1475.4px;top:147.03px;font-size:9.3px;line-height:12.09px;color:#ababab;transform:scaleX(1.079);">-∞</span>
<span class="t" style="left:1475.4px;top:163.33px;font-size:9.3px;line-height:12.09px;color:#ababab;transform:scaleX(0.938);">-12</span>
<span class="t" style="left:1475.4px;top:179.43px;font-size:9.3px;line-height:12.09px;color:#ababab;transform:scaleX(1.04);">-6</span>
<span class="t" style="left:1475.4px;top:192.63px;font-size:9.3px;line-height:12.09px;color:#ababab;transform:scaleX(1.04);">-3</span>
<div class="b" style="left:1510.6px;top:134.4px;width:15px;height:12.4px;background:#181818;border:1px solid #2c2c2c;box-sizing:border-box;"></div>
<span class="t" style="left:1515.75px;top:135.83px;font-size:8.8px;line-height:11.44px;color:#4a90e2;">1</span>
<div class="b" style="left:1510.6px;top:155px;width:15px;height:12.4px;background:#181818;border:1px solid #2c2c2c;box-sizing:border-box;"></div>
<span class="t" style="left:1515.75px;top:156.43px;font-size:8.8px;line-height:11.44px;color:#4a90e2;">2</span>
<svg class="b" style="left:8px;top:225px" width="1460" height="237"><defs><linearGradient id="gF" x1="0" y1="0" x2="0" y2="1"><stop offset="0" stop-color="#2b2b2b"/><stop offset="0.03" stop-color="#474747"/><stop offset="0.07" stop-color="#5e5e5e"/><stop offset="0.12" stop-color="#6e6e6e"/><stop offset="0.2" stop-color="#787878"/><stop offset="0.32" stop-color="#828282"/><stop offset="0.38" stop-color="#8c8c8c"/><stop offset="0.45" stop-color="#a1a1a1"/><stop offset="0.52" stop-color="#b0b0b0"/><stop offset="0.6" stop-color="#bababa"/><stop offset="0.7" stop-color="#c4c4c4"/><stop offset="0.8" stop-color="#cccccc"/><stop offset="0.95" stop-color="#d4d4d4"/><stop offset="1" stop-color="#ebebeb"/></linearGradient>
<linearGradient id="gL" x1="0" y1="0" x2="0" y2="1"><stop offset="0" stop-color="#141414"/><stop offset="0.15" stop-color="#2e2e2e"/><stop offset="0.4" stop-color="#4a4a4a"/><stop offset="0.55" stop-color="#5e5e5e"/><stop offset="0.75" stop-color="#757575"/><stop offset="0.9" stop-color="#8f8f8f"/><stop offset="1" stop-color="#c7c7c7"/></linearGradient>
<linearGradient id="gI" x1="0" y1="0" x2="0" y2="1"><stop offset="0" stop-color="#0a0a0a"/><stop offset="0.3" stop-color="#212121"/><stop offset="0.6" stop-color="#3d3d3d"/><stop offset="0.8" stop-color="#5c5c5c"/><stop offset="0.92" stop-color="#8f8f8f"/><stop offset="1" stop-color="#d9d9d9"/></linearGradient>
<linearGradient id="gM" x1="0" y1="0" x2="0" y2="1"><stop offset="0" stop-color="#1f1f1f"/><stop offset="0.15" stop-color="#4c4c4c"/><stop offset="0.35" stop-color="#707070"/><stop offset="0.5" stop-color="#8f8f8f"/><stop offset="0.7" stop-color="#a6a6a6"/><stop offset="0.9" stop-color="#b5b5b5"/><stop offset="1" stop-color="#d9d9d9"/></linearGradient>
<linearGradient id="gD" x1="0" y1="0" x2="0" y2="1"><stop offset="0" stop-color="#080808"/><stop offset="0.28" stop-color="#141414"/><stop offset="0.4" stop-color="#424242"/><stop offset="0.55" stop-color="#5e5e5e"/><stop offset="0.75" stop-color="#737373"/><stop offset="0.9" stop-color="#878787"/><stop offset="1" stop-color="#cccccc"/></linearGradient>
<linearGradient id="gK" x1="0" y1="0" x2="0" y2="1"><stop offset="0" stop-color="#1f1f1f"/><stop offset="0.2" stop-color="#424242"/><stop offset="0.4" stop-color="#5c5c5c"/><stop offset="0.5" stop-color="#757575"/><stop offset="0.65" stop-color="#949494"/><stop offset="0.8" stop-color="#a8a8a8"/><stop offset="0.95" stop-color="#b8b8b8"/><stop offset="1" stop-color="#d9d9d9"/></linearGradient>
<filter id="sp" x="0" y="0" width="100%%" height="100%%" color-interpolation-filters="sRGB"><feTurbulence type="fractalNoise" baseFrequency="0.3 0.004" numOctaves="3" seed="5" result="a"/><feColorMatrix in="a" type="matrix" values="1 0 0 0 0  1 0 0 0 0  1 0 0 0 0  0 0 0 0 1" result="a0"/><feComponentTransfer in="a0" result="a1"><feFuncR type="table" tableValues="0 0.5 0.68"/><feFuncG type="table" tableValues="0 0.5 0.68"/><feFuncB type="table" tableValues="0 0.5 0.68"/></feComponentTransfer><feTurbulence type="fractalNoise" baseFrequency="0.55 0.5" numOctaves="2" seed="11" result="b"/><feColorMatrix in="b" type="matrix" values="1 0 0 0 0  1 0 0 0 0  1 0 0 0 0  0 0 0 0 1" result="b0"/><feComponentTransfer in="b0" result="b1"><feFuncR type="table" tableValues="0 0.5 0.7"/><feFuncG type="table" tableValues="0 0.5 0.7"/><feFuncB type="table" tableValues="0 0.5 0.7"/></feComponentTransfer><feTurbulence type="fractalNoise" baseFrequency="0.012 0.02" numOctaves="2" seed="3" result="c"/><feColorMatrix in="c" type="matrix" values="1 0 0 0 0  1 0 0 0 0  1 0 0 0 0  0 0 0 0 1" result="c1"/><feComposite in="SourceGraphic" in2="c1" operator="arithmetic" k1="0.26" k2="0.87" k3="0" k4="0" result="m0"/><feComposite in="m0" in2="a1" operator="arithmetic" k1="-1.2" k2="1.6" k3="1.2" k4="-0.6" result="m1"/><feComposite in="m1" in2="b1" operator="arithmetic" k1="1.7" k2="0.15" k3="-0.255" k4="0.128" result="m"/><feComponentTransfer in="m"><feFuncR type="table" tableValues="0.000 0.078 0.251 0.502 0.769 0.886 0.925 0.957 0.976 0.996 1.000"/><feFuncG type="table" tableValues="0.000 0.024 0.047 0.078 0.071 0.118 0.243 0.439 0.620 0.816 0.957"/><feFuncB type="table" tableValues="0.000 0.188 0.408 0.502 0.251 0.110 0.086 0.118 0.196 0.329 0.627"/></feComponentTransfer></filter><linearGradient id="fd" x1="0" y1="0" x2="1" y2="0"><stop offset="0" stop-color="#0a0a0a" stop-opacity="0"/><stop offset="0.5" stop-color="#0a0a0a" stop-opacity="0.5"/><stop offset="1" stop-color="#0a0a0a" stop-opacity="0.95"/></linearGradient><linearGradient id="tf" x1="0" y1="0" x2="0" y2="1"><stop offset="0" stop-color="#050505" stop-opacity="1"/><stop offset="0.5" stop-color="#050505" stop-opacity="0.9"/><stop offset="1" stop-color="#050505" stop-opacity="0"/></linearGradient><linearGradient id="wd" x1="0" y1="1" x2="1" y2="0"><stop offset="0.3" stop-color="#0a0a0a" stop-opacity="0"/><stop offset="0.5" stop-color="#0a0a0a" stop-opacity="0.5"/><stop offset="0.7" stop-color="#0a0a0a" stop-opacity="0.85"/><stop offset="1" stop-color="#0a0a0a" stop-opacity="0.98"/></linearGradient><g id="chn" filter="url(#sp)"><rect x="0" y="0" width="1460" height="116.5" fill="#0a0a0a"/><rect x="-0.5" y="0" width="14.5" height="116.5" fill="url(#gI)"/><rect x="14" y="0" width="146.2" height="116.5" fill="url(#gF)"/><rect x="162.3" y="0" width="87.7" height="116.5" fill="url(#gF)"/><rect x="251.8" y="0" width="88.5" height="116.5" fill="url(#gF)"/><rect x="341.4" y="0" width="131.6" height="116.5" fill="url(#gF)"/><rect x="475.3" y="0" width="112.4" height="116.5" fill="url(#gF)"/><rect x="589" y="0" width="1.6" height="116.5" fill="url(#gF)"/><rect x="590.6" y="0" width="2" height="116.5" fill="url(#gL)"/><rect x="592.6" y="0" width="179" height="116.5" fill="url(#gF)"/><rect x="773" y="0" width="124.3" height="116.5" fill="url(#gF)"/><rect x="897.6" y="0" width="11.8" height="116.5" fill="url(#gL)"/><rect x="909.4" y="0" width="136.8" height="116.5" fill="url(#gF)"/><rect x="1046.8" y="0" width="125.7" height="116.5" fill="url(#gF)"/><rect x="1173.5" y="0" width="10.5" height="116.5" fill="url(#gD)"/><rect x="1184" y="0" width="8.3" height="116.5" fill="url(#gF)"/><rect x="1192.3" y="0" width="27.1" height="116.5" fill="url(#gK)"/><rect x="1219.4" y="0" width="131" height="116.5" fill="url(#gF)"/><rect x="1350.4" y="0" width="10.9" height="116.5" fill="url(#gM)"/><rect x="1363.5" y="0" width="96" height="116.5" fill="url(#gF)"/><rect x="157" y="0" width="3.2" height="116.5" fill="url(#wd)"/><rect x="158" y="0" width="2.2" height="116.5" fill="url(#fd)"/><rect x="462.6" y="0" width="10.4" height="116.5" fill="url(#wd)"/><rect x="470.8" y="0" width="2.2" height="116.5" fill="url(#fd)"/><rect x="764" y="0" width="7.6" height="116.5" fill="url(#wd)"/><rect x="769.4" y="0" width="2.2" height="116.5" fill="url(#fd)"/><rect x="1030.5" y="0" width="15.7" height="116.5" fill="url(#wd)"/><rect x="1044" y="0" width="2.2" height="116.5" fill="url(#fd)"/><rect x="1355" y="0" width="6.3" height="116.5" fill="url(#wd)"/><rect x="1359.1" y="0" width="2.2" height="116.5" fill="url(#fd)"/><rect x="1455.5" y="0" width="4" height="116.5" fill="url(#wd)"/><rect x="1457.3" y="0" width="2.2" height="116.5" fill="url(#fd)"/><rect x="1031.5" y="0" width="14.7" height="64.1" fill="url(#tf)"/></g></defs><rect width="1460" height="237" fill="#000"/><use href="#chn" y="1"/><use href="#chn" y="119.5"/><rect x="0" y="117" width="1460" height="1.3" fill="#e9dfa0"/><rect x="0" y="118.3" width="1460" height="1.2" fill="#000"/></svg>
<div class="b" style="left:1468.3px;top:225px;width:59.7px;height:236px;background:#252525;"></div>
<div class="b" style="left:1468.3px;top:342.6px;width:59.7px;height:1.2px;background:#1a1a1a;"></div>
<span class="t" style="left:1475.2px;top:225.93px;font-size:9.3px;line-height:12.09px;color:#b0b0b0;transform:scaleX(0.915);">Hz</span>
<span class="t" style="left:1475.4px;top:242.23px;font-size:9.3px;line-height:12.09px;color:#dadada;font-weight:bold;text-shadow:none;transform:scaleX(0.928);">10k</span>
<span class="t" style="left:1475.4px;top:262.13px;font-size:9.3px;line-height:12.09px;color:#555;transform:scaleX(0.957);">6k</span>
<span class="t" style="left:1475.4px;top:278.93px;font-size:9.3px;line-height:12.09px;color:#555;transform:scaleX(0.957);">4k</span>
<span class="t" style="left:1475.4px;top:304.93px;font-size:9.3px;line-height:12.09px;color:#555;transform:scaleX(0.957);">2k</span>
<span class="t" style="left:1475.4px;top:321.63px;font-size:9.3px;line-height:12.09px;color:#dadada;font-weight:bold;text-shadow:none;transform:scaleX(0.909);">1k</span>
<svg class="b" style="left:0;top:0" width="1480" height="470" shape-rendering="crispEdges"><path d="M1469.3 247.5h3M1469.3 255.5h1.6M1469.3 267.5h1.6M1469.3 284.5h1.6M1469.3 310.5h1.6M1469.3 326.5h3" stroke="#b0b0b0" stroke-width="1"/></svg>
<span class="t" style="left:1475.2px;top:344.43px;font-size:9.3px;line-height:12.09px;color:#b0b0b0;transform:scaleX(0.915);">Hz</span>
<span class="t" style="left:1475.4px;top:360.73px;font-size:9.3px;line-height:12.09px;color:#dadada;font-weight:bold;text-shadow:none;transform:scaleX(0.928);">10k</span>
<span class="t" style="left:1475.4px;top:380.63px;font-size:9.3px;line-height:12.09px;color:#555;transform:scaleX(0.957);">6k</span>
<span class="t" style="left:1475.4px;top:397.43px;font-size:9.3px;line-height:12.09px;color:#555;transform:scaleX(0.957);">4k</span>
<span class="t" style="left:1475.4px;top:423.43px;font-size:9.3px;line-height:12.09px;color:#555;transform:scaleX(0.957);">2k</span>
<span class="t" style="left:1475.4px;top:440.13px;font-size:9.3px;line-height:12.09px;color:#dadada;font-weight:bold;text-shadow:none;transform:scaleX(0.909);">1k</span>
<svg class="b" style="left:0;top:0" width="1480" height="470" shape-rendering="crispEdges"><path d="M1469.3 366.5h3M1469.3 374.5h1.6M1469.3 386.5h1.6M1469.3 402.5h1.6M1469.3 428.5h1.6M1469.3 445.5h3" stroke="#b0b0b0" stroke-width="1"/></svg>
<div class="b" style="left:7px;top:216.8px;width:1521px;height:8.2px;background:#393939;"></div>
<svg class="b" style="left:758px;top:219.3px" width="22" height="4"><path d="M0 1.5h21" stroke="#5c5c5c" stroke-width="3" stroke-dasharray="1 1"/></svg>
<svg class="b" style="left:1508px;top:219px" width="8" height="5"><path d="M0.5 0.5h6.4L3.7 3.8z" fill="#b9b9b9"/></svg>
<span class="t" style="left:9.3px;top:470.75px;font-size:13.6px;line-height:17.68px;color:#3d8fe2;transform:scaleX(0.96);">0:00.000</span>
<svg class="b" style="left:570px;top:468px" width="250" height="18"><rect x="10.3" y="5.2" width="7.2" height="7.2" fill="#4a4a4a"/><path d="M34.4 5l7.6 3.8-7.6 3.8z" fill="#c2c2c2"/><path d="M61.4 5.2v7.4M65.4 5.2v7.4" stroke="#4a4a4a" stroke-width="2.2"/><path d="M83.4 5.2v7.4" stroke="#c2c2c2" stroke-width="1.6"/><path d="M92.4 5.2v7.4l-6.6-3.7z" fill="#c2c2c2"/><path d="M112.6 5.8v6l-6.2-3zM119 5.8v6l-6.2-3z" fill="#c2c2c2"/><path d="M130 5.8v6l6.2-3zM136.4 5.8v6l6.2-3z" fill="#c2c2c2"/><path d="M165.6 5.2v7.4" stroke="#c2c2c2" stroke-width="1.6"/><path d="M156.4 5.2v7.4l6.6-3.7z" fill="#c2c2c2"/><circle cx="185.9" cy="8.9" r="4.2" fill="#f04444"/><path d="M208.2 6.7H205.1V12.4H215.2V9.4" fill="none" stroke="#c2c2c2" stroke-width="1.5"/><path d="M207.6 9.4q.3-2.2 2.6-2.2h1.2" fill="none" stroke="#c2c2c2" stroke-width="1.5"/><path d="M210.7 3.9l3.7 2.7-3.7 2.7z" fill="#c2c2c2"/><path d="M232.5 4.3q-0.9 0 -0.9 1v2.1l-2.9 1.4 2.9 1.4v2.1q0 1 .9 1" fill="none" stroke="#c2c2c2" stroke-width="1.4"/><path d="M233.7 4.3q.9 0 .9 1v2.1l2.6 1.4-2.6 1.4v2.1q0 1-.9 1" fill="none" stroke="#c2c2c2" stroke-width="1.4"/><path d="M236 8.7h2.5" stroke="#c2c2c2" stroke-width="1.6"/><path d="M238 5.8l3.6 2.9-3.6 2.9z" fill="#c2c2c2"/></svg>
<svg class="b" style="left:1280px;top:466px" width="250" height="22"><path d="M8.3 5.6V16.6" stroke="#c2c2c2" stroke-width="1.2"/><path d="M8.3 4.6l1.9 2.6h-3.8zM8.3 17.6l1.9-2.6h-3.8z" fill="#c2c2c2"/><circle cx="14.6" cy="10.6" r="3.3" fill="none" stroke="#c2c2c2" stroke-width="1.3"/><path d="M17 13l3.1 3.1" stroke="#c2c2c2" stroke-width="1.8"/><path d="M12.8 10.6h3.6" stroke="#c2c2c2" stroke-width="1.1"/><path d="M14.6 8.8v3.6" stroke="#c2c2c2" stroke-width="1.1"/><path d="M33.3 5.6V16.6" stroke="#c2c2c2" stroke-width="1.2"/><path d="M33.3 4.6l1.9 2.6h-3.8zM33.3 17.6l1.9-2.6h-3.8z" fill="#c2c2c2"/><circle cx="39.3" cy="10.6" r="3.3" fill="none" stroke="#c2c2c2" stroke-width="1.3"/><path d="M41.7 13l3.1 3.1" stroke="#c2c2c2" stroke-width="1.8"/><path d="M37.5 10.6h3.6" stroke="#c2c2c2" stroke-width="1.1"/><path d="M57 5.6H68.6" stroke="#c2c2c2" stroke-width="1.2"/><path d="M56 5.6l2.6-1.9v3.8zM69.6 5.6l-2.6-1.9v3.8z" fill="#c2c2c2"/><circle cx="62.8" cy="11.6" r="3.3" fill="none" stroke="#c2c2c2" stroke-width="1.3"/><path d="M65.2 14l3.1 3.1" stroke="#c2c2c2" stroke-width="1.8"/><path d="M61 11.6h3.6" stroke="#c2c2c2" stroke-width="1.1"/><path d="M62.8 9.8v3.6" stroke="#c2c2c2" stroke-width="1.1"/><path d="M81.6 5.6H93.6" stroke="#4a4a4a" stroke-width="1.2"/><path d="M80.6 5.6l2.6-1.9v3.8zM94.6 5.6l-2.6-1.9v3.8z" fill="#4a4a4a"/><circle cx="87.6" cy="11.6" r="3.3" fill="none" stroke="#4a4a4a" stroke-width="1.3"/><path d="M90 14l3.1 3.1" stroke="#4a4a4a" stroke-width="1.8"/><path d="M85.8 11.6h3.6" stroke="#4a4a4a" stroke-width="1.1"/><circle cx="111.5" cy="10.4" r="3.3" fill="none" stroke="#4a4a4a" stroke-width="1.3"/><path d="M113.9 12.8l3.1 3.1" stroke="#4a4a4a" stroke-width="1.8"/><path d="M109.7 10.4h3.6" stroke="#4a4a4a" stroke-width="1.1"/><path d="M111.5 4v1.6M111.5 15.6v1.6M105.2 10.4h1.6M116.6 10.4h1.6" stroke="#4a4a4a" stroke-width="1.5"/><path d="M132.5 7q-1.4 0 -1.4 1.3V10.6l-1.3 1.2l1.3 1.2V15.3q0 1.3 1.4 1.3" fill="none" stroke="#c2c2c2" stroke-width="1.2"/><circle cx="139.6" cy="11" r="3.4" fill="none" stroke="#c2c2c2" stroke-width="1.3"/><path d="M142 13.4l3.2 3.2" stroke="#c2c2c2" stroke-width="1.8"/><path d="M156 7q1.4 0 1.4 1.3V10.6l1.3 1.2l-1.3 1.2V15.3q0 1.3 -1.4 1.3" fill="none" stroke="#c2c2c2" stroke-width="1.2"/><circle cx="164.3" cy="11" r="3.4" fill="none" stroke="#c2c2c2" stroke-width="1.3"/><path d="M166.7 13.4l3.2 3.2" stroke="#c2c2c2" stroke-width="1.8"/><path d="M179.2 7q-1.4 0 -1.4 1.3V10.6l-1.3 1.2l1.3 1.2V15.3q0 1.3 1.4 1.3" fill="none" stroke="#c2c2c2" stroke-width="1.2"/><path d="M181.6 7q1.4 0 1.4 1.3V10.6l1.3 1.2l-1.3 1.2V15.3q0 1.3 -1.4 1.3" fill="none" stroke="#c2c2c2" stroke-width="1.2"/><circle cx="188.4" cy="11" r="3.4" fill="none" stroke="#c2c2c2" stroke-width="1.3"/><path d="M190.8 13.4l3.2 3.2" stroke="#c2c2c2" stroke-width="1.8"/><circle cx="210.3" cy="12.3" r="4.6" fill="none" stroke="#c2c2c2" stroke-width="1.4"/><path d="M210.3 12.3v-4.2M208.6 5.6h3.4M206.4 8.6l-2.4-2" stroke="#c2c2c2" stroke-width="1.4" fill="none"/><path d="M230.4 6V16.6" stroke="#3d3d3d" stroke-width="1.2"/><path d="M230.4 5l1.9 2.6h-3.8zM230.4 17.6l1.9-2.6h-3.8z" fill="#3d3d3d"/><circle cx="236.4" cy="10.8" r="3.2" fill="none" stroke="#3d3d3d" stroke-width="1.3"/><path d="M238.7 13.1l3 3" stroke="#3d3d3d" stroke-width="1.8"/><path d="M234.6 10.8h3.5" stroke="#3d3d3d" stroke-width="1.1"/><path d="M236.4 9v3.5" stroke="#3d3d3d" stroke-width="1.1"/></svg>
<div class="b" style="left:0px;top:491.5px;width:1536px;height:4px;background:#181818;"></div>
<div class="b" style="left:0px;top:495.5px;width:1536px;height:254.5px;background:#232323;"></div>
<div class="b" style="left:1531.4px;top:495.5px;width:2.1px;height:254.5px;background:#1e1e1e;"></div>
<div class="b" style="left:1533.5px;top:495.5px;width:2.5px;height:254.5px;background:#272727;"></div>
<span class="t" style="left:9.7px;top:502.63px;font-size:9.8px;line-height:12.74px;color:#e6e6e6;transform:scaleX(0.909);">Частотный анализ</span>
<svg class="b" style="left:93.3px;top:504.5px" width="8" height="8"><path d="M0 1h6.6M0 3.6h6.6M0 6.2h6.6" stroke="#d0d0d0" stroke-width="1"/></svg>
<div class="b" style="left:9.2px;top:515.2px;width:91.6px;height:1.9px;background:#dedede;"></div>
<span class="t" style="left:118.8px;top:502.63px;font-size:9.8px;line-height:12.74px;color:#a6a6a6;transform:scaleX(0.899);">Статистика Амплитуды</span>
<span class="t" style="left:9.7px;top:529.33px;font-size:9.8px;line-height:12.74px;color:#969696;transform:scaleX(0.885);">Масштаб:</span>
<div class="b" style="left:52.3px;top:525.7px;width:107.4px;height:15.6px;background:#1b1b1b;border:1px solid #303030;box-sizing:border-box;border-radius:2px;"></div>
<span class="t" style="left:57.5px;top:529.33px;font-size:9.8px;line-height:12.74px;color:#e4e4e4;transform:scaleX(0.926);">Логарифмический</span>
<svg class="b" style="left:148.6px;top:530.6px" width="8" height="6"><path d="M0.8 1l3 3 3-3" fill="none" stroke="#c8c8c8" stroke-width="1"/></svg>
<svg class="b" style="left:172.5px;top:527.5px" width="14" height="13" fill="none"><rect x="3.6" y="3.6" width="8.6" height="7.6" stroke="#6e6e6e" stroke-width="1" stroke-dasharray="1.5 1"/><rect x="0.7" y="0.7" width="8.4" height="7.4" stroke="#c2c2c2" stroke-width="1.3" fill="#232323"/></svg>
<span class="t" style="left:198.8px;top:529.43px;font-size:9.8px;line-height:12.74px;color:#a0a0a0;transform:scaleX(0.898);">Остановка кадра:</span>
<div class="b" style="left:274.2px;top:525.5px;width:18.2px;height:16px;background:#181818;border:1px solid #303030;box-sizing:border-box;border-radius:2px;"></div>
<span class="t" style="left:280.58px;top:529.13px;font-size:9.8px;line-height:12.74px;color:#4a90e2;">1</span>
<div class="b" style="left:273.9px;top:543.3px;width:18.6px;height:3.4px;background:#e01b1b;border-radius:1px;"></div>
<div class="b" style="left:295.42px;top:525.5px;width:18.2px;height:16px;background:#252525;border:1px solid #353535;box-sizing:border-box;border-radius:2px;"></div>
<span class="t" style="left:301.8px;top:529.13px;font-size:9.8px;line-height:12.74px;color:#b4b4b4;">2</span>
<div class="b" style="left:295.12px;top:543.3px;width:18.6px;height:3.4px;background:#f08a1e;border-radius:1px;"></div>
<div class="b" style="left:316.64px;top:525.5px;width:18.2px;height:16px;background:#252525;border:1px solid #353535;box-sizing:border-box;border-radius:2px;"></div>
<span class="t" style="left:323.02px;top:529.13px;font-size:9.8px;line-height:12.74px;color:#b4b4b4;">3</span>
<div class="b" style="left:316.34px;top:543.3px;width:18.6px;height:3.4px;background:#ecec1e;border-radius:1px;"></div>
<div class="b" style="left:337.86px;top:525.5px;width:18.2px;height:16px;background:#252525;border:1px solid #353535;box-sizing:border-box;border-radius:2px;"></div>
<span class="t" style="left:344.24px;top:529.13px;font-size:9.8px;line-height:12.74px;color:#b4b4b4;">4</span>
<div class="b" style="left:337.56px;top:543.3px;width:18.6px;height:3.4px;background:#7fe21e;border-radius:1px;"></div>
<div class="b" style="left:359.08px;top:525.5px;width:18.2px;height:16px;background:#252525;border:1px solid #353535;box-sizing:border-box;border-radius:2px;"></div>
<span class="t" style="left:365.46px;top:529.13px;font-size:9.8px;line-height:12.74px;color:#b4b4b4;">5</span>
<div class="b" style="left:358.78px;top:543.3px;width:18.6px;height:3.4px;background:#3fc13f;border-radius:1px;"></div>
<div class="b" style="left:380.3px;top:525.5px;width:18.2px;height:16px;background:#252525;border:1px solid #353535;box-sizing:border-box;border-radius:2px;"></div>
<span class="t" style="left:386.68px;top:529.13px;font-size:9.8px;line-height:12.74px;color:#b4b4b4;">6</span>
<div class="b" style="left:380px;top:543.3px;width:18.6px;height:3.4px;background:#1fd6e6;border-radius:1px;"></div>
<div class="b" style="left:401.52px;top:525.5px;width:18.2px;height:16px;background:#252525;border:1px solid #353535;box-sizing:border-box;border-radius:2px;"></div>
<span class="t" style="left:407.9px;top:529.13px;font-size:9.8px;line-height:12.74px;color:#b4b4b4;">7</span>
<div class="b" style="left:401.22px;top:543.3px;width:18.6px;height:3.4px;background:#2f8fe6;border-radius:1px;"></div>
<div class="b" style="left:422.74px;top:525.5px;width:18.2px;height:16px;background:#252525;border:1px solid #353535;box-sizing:border-box;border-radius:2px;"></div>
<span class="t" style="left:429.12px;top:529.13px;font-size:9.8px;line-height:12.74px;color:#b4b4b4;">8</span>
<div class="b" style="left:422.44px;top:543.3px;width:18.6px;height:3.4px;background:#e21fe2;border-radius:1px;"></div>
<div class="b" style="left:9px;top:555.5px;width:1517px;height:177.5px;background:#232323;border:1px solid #2d2d2d;box-sizing:border-box;"></div>
<div class="b" style="left:13.3px;top:560px;width:1479px;height:152.2px;background:#000;"></div>
<span class="t" style="left:18.7px;top:562.33px;font-size:9.8px;line-height:12.74px;color:#333633;transform:scaleX(0.91);">Анализированое выделение</span>
<svg class="b" style="left:0;top:550px" width="1536" height="190"><g shape-rendering="crispEdges"><path d="M13.3 21.5H1492M13.3 35.5H1492M13.3 49.5H1492M13.3 62.5H1492M13.3 76.5H1492M13.3 90.5H1492M13.3 104.5H1492M13.3 118.5H1492M13.3 132.5H1492M13.3 145.5H1492M13.3 159.5H1492" stroke="#0b3312" stroke-width="1"/><path d="M16.5 10V162M320.5 10V162M670.5 10V162M1019.5 10V162M1369.5 10V162" stroke="#0b3312" stroke-width="1"/><path d="M1489.5 10V162" stroke="#0c3a14" stroke-width="1" stroke-dasharray="1 1"/><path d="M14 162.8H1494" stroke="#a8a8a8" stroke-width="1.4"/><path d="M1493.5 10V163.6" stroke="#a8a8a8" stroke-width="1.5"/><path d="M76.5 163.6v4.2M137.5 163.6v4.2M181.5 163.6v4.2M215.5 163.6v4.2M243.5 163.6v4.2M266.5 163.6v4.2M286.5 163.6v4.2M304.5 163.6v4.2M320.5 163.6v6.4M425.5 163.6v4.2M487.5 163.6v4.2M531.5 163.6v4.2M565.5 163.6v4.2M592.5 163.6v4.2M616.5 163.6v4.2M636.5 163.6v4.2M654.5 163.6v4.2M670.5 163.6v6.4M775.5 163.6v4.2M837.5 163.6v4.2M880.5 163.6v4.2M914.5 163.6v4.2M942.5 163.6v4.2M965.5 163.6v4.2M986.5 163.6v4.2M1003.5 163.6v4.2M1019.5 163.6v6.4M1125.5 163.6v4.2M1186.5 163.6v4.2M1230.5 163.6v4.2M1264.5 163.6v4.2M1292.5 163.6v4.2M1315.5 163.6v4.2M1335.5 163.6v4.2M1353.5 163.6v4.2M1369.5 163.6v6.4M1474.5 163.6v4.2M16.5 163.6v6.4M1489.5 163.6v6.4" stroke="#bdbdbd" stroke-width="1"/><path d="M1494.4 10.5h3.6M1494.4 13.5h3.6M1494.4 15.5h3.6M1494.4 18.5h3.6M1494.4 21.5h6.2M1494.4 24.5h3.6M1494.4 27.5h3.6M1494.4 29.5h3.6M1494.4 32.5h3.6M1494.4 35.5h6.2M1494.4 38.5h3.6M1494.4 40.5h3.6M1494.4 43.5h3.6M1494.4 46.5h3.6M1494.4 49.5h6.2M1494.4 51.5h3.6M1494.4 54.5h3.6M1494.4 57.5h3.6M1494.4 60.5h3.6M1494.4 62.5h6.2M1494.4 65.5h3.6M1494.4 68.5h3.6M1494.4 71.5h3.6M1494.4 73.5h3.6M1494.4 76.5h6.2M1494.4 79.5h3.6M1494.4 82.5h3.6M1494.4 85.5h3.6M1494.4 87.5h3.6M1494.4 90.5h6.2M1494.4 93.5h3.6M1494.4 96.5h3.6M1494.4 98.5h3.6M1494.4 101.5h3.6M1494.4 104.5h6.2M1494.4 107.5h3.6M1494.4 109.5h3.6M1494.4 112.5h3.6M1494.4 115.5h3.6M1494.4 118.5h6.2M1494.4 120.5h3.6M1494.4 123.5h3.6M1494.4 126.5h3.6M1494.4 129.5h3.6M1494.4 132.5h6.2M1494.4 134.5h3.6M1494.4 137.5h3.6M1494.4 140.5h3.6M1494.4 143.5h3.6M1494.4 145.5h6.2M1494.4 148.5h3.6M1494.4 151.5h3.6M1494.4 154.5h3.6M1494.4 156.5h3.6M1494.4 159.5h6.2" stroke="#bdbdbd" stroke-width="1"/></g></svg>
<span class="t" style="left:12.2px;top:721.23px;font-size:9.4px;line-height:12.22px;color:#c6c6c6;transform:scaleX(0.878);">Гц</span>
<span class="t" style="left:74.14px;top:721.23px;font-size:9.4px;line-height:12.22px;color:#525252;transform:scaleX(0.9);">2</span>
<span class="t" style="left:135.71px;top:721.23px;font-size:9.4px;line-height:12.22px;color:#525252;transform:scaleX(0.9);">3</span>
<span class="t" style="left:179.4px;top:721.23px;font-size:9.4px;line-height:12.22px;color:#525252;transform:scaleX(0.9);">4</span>
<span class="t" style="left:213.29px;top:721.23px;font-size:9.4px;line-height:12.22px;color:#525252;transform:scaleX(0.9);">5</span>
<span class="t" style="left:240.97px;top:721.23px;font-size:9.4px;line-height:12.22px;color:#525252;transform:scaleX(0.9);">6</span>
<span class="t" style="left:264.38px;top:721.23px;font-size:9.4px;line-height:12.22px;color:#525252;transform:scaleX(0.9);">7</span>
<span class="t" style="left:284.66px;top:721.23px;font-size:9.4px;line-height:12.22px;color:#525252;transform:scaleX(0.9);">8</span>
<span class="t" style="left:302.55px;top:721.23px;font-size:9.4px;line-height:12.22px;color:#525252;transform:scaleX(0.9);">9</span>
<span class="t" style="left:316.2px;top:721.23px;font-size:9.4px;line-height:12.22px;color:#cfcfcf;font-weight:bold;text-shadow:none;transform:scaleX(0.9);">10</span>
<span class="t" style="left:421.46px;top:721.23px;font-size:9.4px;line-height:12.22px;color:#525252;transform:scaleX(0.9);">20</span>
<span class="t" style="left:483.03px;top:721.23px;font-size:9.4px;line-height:12.22px;color:#525252;transform:scaleX(0.9);">30</span>
<span class="t" style="left:526.72px;top:721.23px;font-size:9.4px;line-height:12.22px;color:#525252;transform:scaleX(0.9);">40</span>
<span class="t" style="left:560.6px;top:721.23px;font-size:9.4px;line-height:12.22px;color:#525252;transform:scaleX(0.9);">50</span>
<span class="t" style="left:588.29px;top:721.23px;font-size:9.4px;line-height:12.22px;color:#525252;transform:scaleX(0.9);">60</span>
<span class="t" style="left:611.7px;top:721.23px;font-size:9.4px;line-height:12.22px;color:#525252;transform:scaleX(0.9);">70</span>
<span class="t" style="left:631.98px;top:721.23px;font-size:9.4px;line-height:12.22px;color:#525252;transform:scaleX(0.9);">80</span>
<span class="t" style="left:649.87px;top:721.23px;font-size:9.4px;line-height:12.22px;color:#525252;transform:scaleX(0.9);">90</span>
<span class="t" style="left:663.51px;top:721.23px;font-size:9.4px;line-height:12.22px;color:#cfcfcf;font-weight:bold;text-shadow:none;transform:scaleX(0.9);">100</span>
<span class="t" style="left:768.77px;top:721.23px;font-size:9.4px;line-height:12.22px;color:#525252;transform:scaleX(0.9);">200</span>
<span class="t" style="left:830.35px;top:721.23px;font-size:9.4px;line-height:12.22px;color:#525252;transform:scaleX(0.9);">300</span>
<span class="t" style="left:874.04px;top:721.23px;font-size:9.4px;line-height:12.22px;color:#525252;transform:scaleX(0.9);">400</span>
<span class="t" style="left:907.92px;top:721.23px;font-size:9.4px;line-height:12.22px;color:#525252;transform:scaleX(0.9);">500</span>
<span class="t" style="left:935.61px;top:721.23px;font-size:9.4px;line-height:12.22px;color:#525252;transform:scaleX(0.9);">600</span>
<span class="t" style="left:959.02px;top:721.23px;font-size:9.4px;line-height:12.22px;color:#525252;transform:scaleX(0.9);">700</span>
<span class="t" style="left:979.3px;top:721.23px;font-size:9.4px;line-height:12.22px;color:#525252;transform:scaleX(0.9);">800</span>
<span class="t" style="left:997.18px;top:721.23px;font-size:9.4px;line-height:12.22px;color:#525252;transform:scaleX(0.9);">900</span>
<span class="t" style="left:1015.54px;top:721.23px;font-size:9.4px;line-height:12.22px;color:#cfcfcf;font-weight:bold;text-shadow:none;transform:scaleX(0.9);">1k</span>
<span class="t" style="left:1121.03px;top:721.23px;font-size:9.4px;line-height:12.22px;color:#525252;transform:scaleX(0.9);">2k</span>
<span class="t" style="left:1182.61px;top:721.23px;font-size:9.4px;line-height:12.22px;color:#525252;transform:scaleX(0.9);">3k</span>
<span class="t" style="left:1226.3px;top:721.23px;font-size:9.4px;line-height:12.22px;color:#525252;transform:scaleX(0.9);">4k</span>
<span class="t" style="left:1260.18px;top:721.23px;font-size:9.4px;line-height:12.22px;color:#525252;transform:scaleX(0.9);">5k</span>
<span class="t" style="left:1287.87px;top:721.23px;font-size:9.4px;line-height:12.22px;color:#525252;transform:scaleX(0.9);">6k</span>
<span class="t" style="left:1311.28px;top:721.23px;font-size:9.4px;line-height:12.22px;color:#525252;transform:scaleX(0.9);">7k</span>
<span class="t" style="left:1331.56px;top:721.23px;font-size:9.4px;line-height:12.22px;color:#525252;transform:scaleX(0.9);">8k</span>
<span class="t" style="left:1349.44px;top:721.23px;font-size:9.4px;line-height:12.22px;color:#525252;transform:scaleX(0.9);">9k</span>
<span class="t" style="left:1362.85px;top:721.23px;font-size:9.4px;line-height:12.22px;color:#cfcfcf;font-weight:bold;text-shadow:none;transform:scaleX(0.9);">10k</span>
<span class="t" style="left:1468.35px;top:721.23px;font-size:9.4px;line-height:12.22px;color:#525252;transform:scaleX(0.9);">20k</span>
<span class="t" style="left:1503.6px;top:556.83px;font-size:9.4px;line-height:12.22px;color:#b0b0b0;transform:scaleX(0.892);">дБ</span>
<span class="t" style="left:1503.4px;top:579.85px;font-size:9.4px;line-height:12.22px;color:#b8b8b8;transform:scaleX(0.928);">-10</span>
<span class="t" style="left:1503.4px;top:593.66px;font-size:9.4px;line-height:12.22px;color:#b8b8b8;transform:scaleX(0.928);">-20</span>
<span class="t" style="left:1503.4px;top:607.48px;font-size:9.4px;line-height:12.22px;color:#b8b8b8;transform:scaleX(0.928);">-30</span>
<span class="t" style="left:1503.4px;top:621.29px;font-size:9.4px;line-height:12.22px;color:#b8b8b8;transform:scaleX(0.928);">-40</span>
<span class="t" style="left:1503.4px;top:635.11px;font-size:9.4px;line-height:12.22px;color:#b8b8b8;transform:scaleX(0.928);">-50</span>
<span class="t" style="left:1503.4px;top:648.92px;font-size:9.4px;line-height:12.22px;color:#b8b8b8;transform:scaleX(0.928);">-60</span>
<span class="t" style="left:1503.4px;top:662.74px;font-size:9.4px;line-height:12.22px;color:#b8b8b8;transform:scaleX(0.928);">-70</span>
<span class="t" style="left:1503.4px;top:676.55px;font-size:9.4px;line-height:12.22px;color:#b8b8b8;transform:scaleX(0.928);">-80</span>
<span class="t" style="left:1503.4px;top:690.37px;font-size:9.4px;line-height:12.22px;color:#b8b8b8;transform:scaleX(0.928);">-90</span>
<span class="t" style="left:1503.4px;top:704.18px;font-size:9.4px;line-height:12.22px;color:#b8b8b8;transform:scaleX(0.936);">-100</span>
<svg class="b" style="left:0;top:550px" width="1500" height="165" fill="none" stroke-linejoin="round"><polyline points="312,159.2 314,158.9 316,158.5 318,158.2 320,157.8 322,157.3 324,156.8 326,156.3 328,155.8 330,155.3 332,154.8 334,154.3 336,153.7 338,153.1 340,152.4 342,151.8 344,151.2 346,150.6 348,149.9 350,149.2 352,148.6 354,147.9 356,147.2 358,146.5 360,145.9 362,145.2 364,144.5 366,143.6 368,142.7 370,141.7 372,140.8 374,139.9 376,139 378,138 380,137.1 382,136.2 384,135.3 386,134.5 388,133.6 390,132.7 392,131.9 394,131 396,130.1 398,129.3 400,128.3 402,127.4 404,126.4 406,125.4 408,124.5 410,123.5 412,122.5 414,121.6 416,120.6 418,119.8 420,119 422,118.1 424,117.3 426,116.5 428,115.7 430,114.9 432,114 434,113.2 436,112.4 438,111.6 440,110.8 442,110 444,109.2 446,108.4 448,107.6 450,106.8 452,106.1 454,105.3 456,104.6 458,103.8 460,103 462,102.3 464,101.5 466,100.8 468,100 470,99.2 472,98.4 474,97.6 476,96.9 478,96.1 480,95.3 482,94.5 484,93.7 486,92.8 488,91.7 490,90.6 492,89.5 494,88.4 496,87.3 498,86.2 500,84.9 502,83.5 504,82.1 506,80.8 508,79.4 510,78 512,76.6 514,75.4 516,74.3 518,73.1 520,71.9 522,70.7 524,69.8 526,68.9 528,68.1 530,67.2 532,66.3 534,65.7 536,65.2 538,64.7 540,64.2 542,63.7 544,63.3 546,62.8 548,62.3 550,61.8 552,61.4 554,60.9 556,60.4 558,60 560,59.5 562,59.1 564,58.6 566,58.3 568,58 570,57.7 572,57.5 574,57.2 576,56.9 578,56.6 580.6,56.3 581.4,56.2 582.2,56.2 583,56.3 583.8,56.6 584.6,56.9 585.4,57 586.2,56.9 587,56.8 587.8,57 588.6,57 589.4,57.3 590.2,57.6 591,57.7 591.8,57.5 592.6,57.6 593.4,58 594.2,58.2 595,58.3 595.8,58.3 596.6,58.4 597.4,58.5 598.2,58.6 599,58.7 599.8,58.7 600.6,58.6 601.4,58.9 602.2,59.3 603,59.4 603.8,59.4 604.6,59.3 605.4,59.5 606.2,59.6 607,59.7 607.8,59.9 608.6,59.9 609.4,59.9 610.2,60.3 611,60.6 611.8,60.5 612.6,60.2 613.4,60.1 614.2,60.1 615,60 615.8,59.8 616.6,59.7 617.4,59.7 618.2,59.6 619,59.3 619.8,59 620.6,58.8 621.4,58.8 622.2,58.7 623,58.4 623.8,58.3 624.6,58.3 625.4,58.3 626.2,58.4 627,58.4 627.8,58.4 628.6,58.5 629.4,58.6 630.2,58.6 631,58.6 631.8,58.8 632.6,59.4 633.4,60.1 634.2,60.7 635,60.9 635.8,60.9 636.6,60.9 637.4,60.9 638.2,60.8 639,60.7 639.8,60.7 640.6,60.9 641.4,61 642.2,60.8 643,60.7 643.8,61.2 644.6,61.7 645.4,61.5 646.2,61.6 647,61.8 647.8,61.7 648.6,61.7 649.4,61.9 650.2,61.8 651,61.5 651.8,61.6 652.6,62.1 653.4,62.4 654.2,62.1 655,62.1 655.8,62.5 656.6,62.7 657.4,62.6 658.2,62.6 659,63 659.8,63.3 660.6,63.4 661.4,63.5 662.2,63.6 663,63.8 663.8,63.9 664.6,63.8 665.4,63.9 666.2,64 667,64.4 667.8,64.5 668.6,64.6 669.4,64.7 670.2,64.8 671,64.9 671.8,64.8 672.6,64.6 673.4,64.5 674.2,64.7 675,64.8 675.8,64.4 676.6,64.4 677.4,64.5 678.2,64.2 679,63.9 679.8,63.5 680.6,63 681.4,62.7 682.2,62.8 683,62.6 683.8,62.4 684.6,62.2 685.4,62.2 686.2,62.1 687,61.9 687.8,61.9 688.6,61.5 689.4,61.1 690.2,61.4 691,61.5 691.8,61.7 692.6,61.3 693.4,60.7 694.2,61 695,61.4 695.8,61.4 696.6,61.6 697.4,62 698.2,62 699,62.3 699.8,62.5 700.6,62.1 701.4,62.2 702.2,62.7 703,63.1 703.8,63 704.6,62.7 705.4,63.1 706.2,63.7 707,64.2 707.8,64.3 708.6,64.1 709.4,63.9 710.2,63.9 711,63.9 711.8,64.2 712.6,64.9 713.4,65 714.2,64.8 715,65.3 715.8,66 716.6,66.2 717.4,66.5 718.2,67.2 719,67.5 719.8,67.7 720.6,67.7 721.4,67.6 722.2,67.2 723,66.7 723.8,66.1 724.6,65.4 725.4,65.2 726.2,64.7 727,64.2 727.8,64.2 728.6,64.1 729.4,63.4 730.2,63.4 731,63.8 731.8,64 732.6,64.9 733.4,65.7 734.2,66.3 735,67.1 735.8,67.7 736.6,68.4 737.4,69.7 738.2,70.8 739,71.6 739.8,72.2 740.6,72.9 741.4,73.3 742.2,73.3 743,73 743.8,72.5 744.6,72.5 745.4,72.9 746.2,72.9 747,72.4 747.8,72.2 748.6,72.2 749.4,71.7 750.2,71.6 751,72.1 751.8,72 752.6,71.7 753.4,71.7 754.2,71.7 755,71.4 755.8,71.1 756.6,71 757.4,70.9 758.2,70.9 759,71.2 759.8,71.7 760.6,72.2 761.4,72.3 762.2,71.8 763,71.7 763.8,72 764.6,72.4 765.4,73 766.2,73.1 767,72.6 767.8,72.9 768.6,73.2 769.4,72.8 770.2,72.7 771,73.2 771.8,73.7 772.6,73.6 773.4,73.3 774.2,73.4 775,73.5 775.8,73.8 776.6,74.2 777.4,74.6 778.2,74.9 779,75.1 779.8,75.2 780.6,75.6 781.4,76 782.2,77.3 783,78.6 783.8,79.2 784.6,79.3 785.4,79.4 786.2,79 787,78.8 787.8,78.5 788.6,77.5 789.4,76.1 790.2,74.1 791,72.1 791.8,71.5 792.6,72.6 793.4,74.1 794.2,75.8 795,77.8 795.8,78.9 796.6,78.8 797.4,78.2 798.2,76.9 799,75.4 799.8,74.8 800.6,75.7 801.4,77 802.2,78.1 803,78.8 803.8,79.7 804.6,80.4 805.4,80.1 806.2,80 807,79.7 807.8,78.3 808.6,77.3 809.4,77.3 810.2,78.5 811,80 811.8,80 812.6,80.1 813.4,80.2 814.2,79.8 815,78.9 815.8,77.4 816.6,76.2 817.4,75.5 818.2,75.7 819,77.1 819.8,78.5 820.6,80.2 821.4,81.2 822.2,81.1 823,80.9 823.8,80.7 824.6,80.2 825.4,80 826.2,80.2 827,80.4 827.8,81.4 828.6,82.1 829.4,81.8 830.2,81.5 831,81.3 831.8,81.1 832.6,79.3 833.4,75.8 834.2,72.8 835,71.8 835.8,72.7 836.6,74.6 837.4,77 838.2,79.6 839,81.4 839.8,82.1 840.6,82.3 841.4,82.4 842.2,82.7 843,82.9 843.8,83.1 844.6,83.5 845.4,83.7 846.2,83.5 847,83.5 847.8,83.2 848.6,82.3 849.4,81.1 850.2,79.1 851,76.6 851.8,74.3 852.6,73.4 853.4,74.1 854.2,76.4 855,79.6 855.8,82 856.6,82.9 857.4,82.1 858.2,80.4 859,78.3 859.8,75.5 860.6,72.7 861.4,72 862.2,74 863,77.1 863.8,79.3 864.6,80.8 865.4,82.5 866.2,82.8 867,81.3 867.8,79.2 868.6,77.5 869.4,76 870.2,75.2 871,76.1 871.8,78.2 872.6,79.8 873.4,81.1 874.2,82.3 875,82.1 875.8,80.8 876.6,78.5 877.4,75.5 878.2,73 879,72.5 879.8,74 880.6,76.8 881.4,79.8 882.2,81.9 883,82.1 883.8,82 884.6,82.6 885.4,82.8 886.2,82.7 887,83.3 887.8,83.8 888.6,83.2 889.4,83.1 890.2,83.7 891,83.8 891.8,83 892.6,82.4 893.4,81.3 894.2,79 895,76 895.8,73.6 896.6,73 897.4,74.1 898.2,76.4 899,79 899.8,80.5 900.6,81.6 901.4,82.2 902.2,82.4 903,81.5 903.8,79.5 904.6,78.8 905.4,79 906.2,79.4 907,80.4 907.8,81.6 908.6,82.5 909.4,82.6 910.2,82 911,81.4 911.8,80.3 912.6,78.6 913.4,77.1 914.2,76.6 915,77 915.8,78.7 916.6,80.7 917.4,82.2 918.2,83.4 919,83.7 919.8,82.7 920.6,80.9 921.4,78.7 922.2,76.4 923,74 923.8,72.7 924.6,73.6 925.4,75.9 926.2,78.9 927,81.7 927.8,83 928.6,83.7 929.4,83.9 930.2,83.7 931,83.4 931.8,83 932.6,83.2 933.4,83.9 934.2,84.4 935,84.1 935.8,83.2 936.6,82.9 937.4,82.6 938.2,81.2 939,78.6 939.8,75.6 940.6,73.3 941.4,72.8 942.2,74.5 943,77.2 943.8,79.5 944.6,81.3 945.4,82.9 946.2,83.7 947,83.4 947.8,82.7 948.6,82.5 949.4,83.3 950.2,83.8 951,83.2 951.8,83 952.6,83.5 953.4,83.4 954.2,82.7 955,81.8 955.8,80 956.6,76.9 957.4,73.6 958.2,71.1 959,71.1 959.8,73.4 960.6,76.2 961.4,79.1 962.2,81.6 963,83 963.8,82.3 964.6,80.7 965.4,77.8 966.2,74.7 967,72.9 967.8,73.1 968.6,74.8 969.4,77.2 970.2,79.8 971,81.6 971.8,82 972.6,81.1 973.4,80.5 974.2,79.6 975,77.6 975.8,76 976.6,76.3 977.4,78.1 978.2,80.3 979,81.5 979.8,82 980.6,82.4 981.4,81.9 982.2,80.2 983,77.9 983.8,76.4 984.6,74.9 985.4,74.2 986.2,75.8 987,78.5 987.8,80.5 988.6,81.6 989.4,82.7 990.2,83.3 991,83.1 991.8,83.1 992.6,82.8 993.4,82.4 994.2,82.8 995,83.2 995.8,83.5 996.6,83.7 997.4,83.2 998.2,82.4 999,81.3 999.8,79 1000.6,75.2 1001.4,71.8 1002.2,70 1003,70.1 1003.8,73 1004.6,77.3 1005.4,80.5 1006.2,82.2 1007,83 1007.8,82.2 1008.6,80.5 1009.4,78.9 1010.2,77.9 1011,77.9 1011.8,79.1 1012.6,80.1 1013.4,81.3 1014.2,82.9 1015,84 1015.8,83.5 1016.6,82 1017.4,80.1 1018.2,78.2 1019,76.9 1019.8,76.1 1020.6,76.5 1021.4,78.4 1022.2,80 1023,81.4 1023.8,82.3 1024.6,82.7 1025.4,82.3 1026.2,81 1027,78.9 1027.8,76.6 1028.6,75.4 1029.4,76.2 1030.2,77.9 1031,79.8 1031.8,81.6 1032.6,82.6 1033.4,82.8 1034.2,82.9 1035,83.7 1035.8,84.5 1036.6,84.3 1037.4,83.7 1038.2,83.4 1039,83.7 1039.8,83.9 1040.6,83.9 1041.4,84.2 1042.2,83.8 1043,82.5 1043.8,80.7 1044.6,78.4 1045.4,75.5 1046.2,73.6 1047,74.3 1047.8,75.9 1048.6,78.2 1049.4,81.2 1050.2,83.1 1051,83.9 1051.8,84.5 1052.6,84.4 1053.4,83.8 1054.2,83.8 1055,84 1055.8,83.7 1056.6,83.5 1057.4,83.9 1058.2,84.6 1059,84.6 1059.8,83.6 1060.6,82.6 1061.4,81.5 1062.2,79.6 1063,77.8 1063.8,76.6 1064.6,76.4 1065.4,78.2 1066.2,80.6 1067,82.6 1067.8,84.2 1068.6,84.4 1069.4,82.9 1070.2,81.1 1071,79.4 1071.8,78.3 1072.6,78.3 1073.4,79.1 1074.2,80.7 1075,82.4 1075.8,83.4 1076.6,84 1077.4,83.9 1078.2,82.5 1079,80.6 1079.8,79.4 1080.6,79.1 1081.4,78.8 1082.2,78.7 1083,80 1083.8,81.7 1084.6,82.6 1085.4,83.1 1086.2,83 1087,81.9 1087.8,79.7 1088.6,77.7 1089.4,76.7 1090.2,77.1 1091,78.6 1091.8,80.7 1092.6,82.9 1093.4,83.6 1094.2,83.6 1095,84.1 1095.8,84.7 1096.6,85.3 1097.4,85.5 1098.2,84.9 1099,84 1099.8,84.1 1100.6,84.1 1101.4,83.6 1102.2,84.1 1103,84.2 1103.8,82.8 1104.6,81.1 1105.4,79.2 1106.2,77.2 1107,76.2 1107.8,76.7 1108.6,78.2 1109.4,79.9 1110.2,82.1 1111,84.5 1111.8,85 1112.6,83.9 1113.4,83.2 1114.2,81.9 1115,80.1 1115.8,79.8 1116.6,80.6 1117.4,80.9 1118.2,82 1119,83.9 1119.8,84.9 1120.6,84.5 1121.4,83.3 1122.2,82 1123,80.4 1123.8,79.5 1124.6,79.6 1125.4,80.1 1126.2,81.1 1127,82.2 1127.8,83.4 1128.6,84.8 1129.4,84.9 1130.2,83.9 1131,82.9 1131.8,80.7 1132.6,77.8 1133.4,77.2 1134.2,78.6 1135,80.7 1135.8,82.9 1136.6,84.2 1137.4,84.4 1138.2,83.8 1139,83.1 1139.8,81.3 1140.6,78.8 1141.4,76.7 1142.2,76.1 1143,77.2 1143.8,79.3 1144.6,82 1145.4,84.4 1146.2,85.1 1147,84.1 1147.8,83 1148.6,81 1149.4,79 1150.2,78.4 1151,78.6 1151.8,79.8 1152.6,81.9 1153.4,84 1154.2,85.1 1155,84.8 1155.8,84.3 1156.6,83.7 1157.4,82.2 1158.2,81 1159,80.8 1159.8,80.5 1160.6,80.6 1161.4,81.9 1162.2,83.6 1163,84.6 1163.8,85.1 1164.6,84.9 1165.4,84 1166.2,82.6 1167,80.7 1167.8,79.3 1168.6,79.6 1169.4,81.2 1170.2,82.9 1171,84.5 1171.8,85.7 1172.6,86 1173.4,84.8 1174.2,83.8 1175,83.7 1175.8,83.7 1176.6,82.9 1177.4,82.7 1178.2,83.6 1179,84.4 1179.8,84.5 1180.6,84.8 1181.4,85.5 1182.2,85.5 1183,85.5 1183.8,85.8 1184.6,85 1185.4,83.8 1186.2,83.3 1187,83.5 1187.8,84.5 1188.6,85.1 1189.4,85 1190.2,85.4 1191,85.8 1191.8,85.3 1192.6,84.4 1193.4,83.7 1194.2,83 1195,82.8 1195.8,83.4 1196.6,84.2 1197.4,84.8 1198.2,85.5 1199,85.9 1199.8,85.5 1200.6,85.2 1201.4,84.8 1202.2,84 1203,83.6 1203.8,83.5 1204.6,83.4 1205.4,84.2 1206.2,86.1 1207,87.1 1207.8,86.9 1208.6,86.6 1209.4,86.2 1210.2,85.6 1211,85 1211.8,84.2 1212.6,83.3 1213.4,84.4 1214.2,84.7 1215,84.3 1215.8,84.3 1216.6,84.4 1217.4,84.8 1218.2,85.5 1219,86.3 1219.8,87.1 1220.6,86.8 1221.4,86.2 1222.2,86.6 1223,87 1223.8,87.4 1224.6,87.7 1225.4,88.1 1226.2,88.6 1227,88.8 1227.8,88.6 1228.6,88.5 1229.4,88.3 1230.2,88.4 1231,89.1 1231.8,89.6 1232.6,89.4 1233.4,89.4 1234.2,89.7 1235,89.8 1235.8,89.4 1236.6,89.6 1237.4,90.1 1238.2,90 1239,89.9 1239.8,90.3 1240.6,90.1 1241.4,90 1242.2,90.7 1243,91 1243.8,90.2 1244.6,89.2 1245.4,89.5 1246.2,90.5 1247,90.5 1247.8,90.1 1248.6,90.1 1249.4,90.2 1250.2,90.6 1251,91.4 1251.8,91.4 1252.6,90.7 1253.4,90.6 1254.2,91 1255,91.3 1255.8,91.7 1256.6,91.8 1257.4,91.3 1258.2,91.1 1259,91.2 1259.8,91.5 1260.6,91.7 1261.4,91.4 1262.2,92.2 1263,93.2 1263.8,93 1264.6,93.1 1265.4,93.5 1266.2,93.4 1267,93.4 1267.8,94 1268.6,94.1 1269.4,94 1270.2,94.7 1271,94.7 1271.8,94.2 1272.6,94.5 1273.4,94.9 1274.2,94.8 1275,94.5 1275.8,94.6 1276.6,94.9 1277.4,94.8 1278.2,94.7 1279,94.8 1279.8,95.4 1280.6,95.9 1281.4,96 1282.2,96.8 1283,97.4 1283.8,97.5 1284.6,97.8 1285.4,98.2 1286.2,97.8 1287,97.2 1287.8,97.3 1288.6,97.6 1289.4,97.5 1290.2,97.4 1291,97.8 1291.8,98.2 1292.6,98.2 1293.4,98 1294.2,97.7 1295,97.6 1295.8,98.1 1296.6,98.3 1297.4,98.2 1298.2,98.2 1299,98.4 1299.8,98.6 1300.6,98.6 1301.4,99 1302.2,99.7 1303,99.8 1303.8,99.9 1304.6,99.8 1305.4,99.6 1306.2,99.8 1307,99.6 1307.8,99.2 1308.6,98.9 1309.4,98.9 1310.2,99.3 1311,99.5 1311.8,99.5 1312.6,99.6 1313.4,99.6 1314.2,99.5 1315,99.7 1315.8,100.2 1316.6,100.3 1317.4,99.8 1318.2,99.7 1319,100.3 1319.8,100.4 1320.6,100.1 1321.4,100.4 1322.2,100.3 1323,99.9 1323.8,99.9 1324.6,99.8 1325.4,100 1326.2,100.2 1327,100.6 1327.8,100.6 1328.6,99.8 1329.4,99.6 1330.2,100.4 1331,100.9 1331.8,101.2 1332.6,101.6 1333.4,101.3 1334.2,100.9 1335,101.3 1335.8,101.3 1336.6,101.3 1337.4,101.8 1338.2,101.6 1339,101 1339.8,101.1 1340.6,101.4 1341.4,101.2 1342.2,101.3 1343,101.6 1343.8,101.4 1344.6,101.4 1345.4,101.6 1346.2,101.4 1347,101.3 1347.8,101.3 1348.6,101.1 1349.4,101.3 1350.2,101.4 1351,101.5 1351.8,101.9 1352.6,101.9 1353.4,101.5 1354.2,101.4 1355,101.6 1355.8,101.7 1356.6,101.8 1357.4,101.7 1358.2,101.6 1359,101.3 1359.8,101.2 1360.6,101.3 1361.4,101.3 1362.2,101.6 1363,101.7 1363.8,101.6 1364.6,101.7 1365.4,101.8 1366.2,102 1367,102.3 1367.8,102.2 1368.6,102 1369.4,102 1370.2,102.1 1371,102.3 1371.8,102.4 1372.6,102.6 1373.4,102.9 1374.2,102.8 1375,103 1375.8,103.4 1376.6,103.4 1377.4,103.4 1378.2,103.5 1379,103.5 1379.8,103.7 1380.6,103.8 1381.4,103.7 1382.2,103.8 1383,104 1383.8,103.9 1384.6,103.8 1385.4,104 1386.2,103.8 1387,103.9 1387.8,104.4 1388.6,104.7 1389.4,104.7 1390.2,104.8 1391,105 1391.8,105.3 1392.6,105.3 1393.4,105.4 1394.2,105.8 1395,105.9 1395.8,105.7 1396.6,106.1 1397.4,106.7 1398.2,106.9 1399,106.8 1399.8,106.9 1400.6,107 1401.4,107.1 1402.2,107.5 1403,108 1403.8,108.3 1404.6,108.3 1405.4,108.4 1406.2,108.7 1407,108.8 1407.8,108.9 1408.6,108.8 1409.4,109 1410.2,109.6 1411,110.2 1411.8,110.2 1412.6,110 1413.4,110 1414.2,110.5 1415,110.9 1415.8,110.8 1416.6,111 1417.4,111.4 1418.2,111.4 1419,111.5 1419.8,111.7 1420.6,111.7 1421.4,111.9 1422.2,112.1 1423,112.1 1423.8,112.5 1424.6,112.7 1425.4,112.9 1426.2,113.2 1427,113.5 1427.8,113.7 1428.6,113.7 1429.4,114.1 1430.2,114.6 1431,115 1431.8,115.1 1432.6,115 1433.4,115.3 1434.2,115.8 1435,116.2 1435.8,116.4 1436.6,116.4 1437.4,116.5 1438.2,116.8 1439,117.1 1439.8,117.2 1440.6,117.6 1441.4,118 1442.2,118.3 1443,118.7 1443.8,119.3 1444.6,119.7 1445.4,120 1446.2,120.1 1447,120.2 1447.8,120.9 1448.6,121.6 1449.4,122.2 1450.2,122.6 1451,122.9 1451.8,123.3 1452.6,123.6 1453.4,124 1454.2,124.5 1455,124.9 1455.8,125.3 1456.6,126.1 1457.4,126.5 1458.2,126.9 1459,127.5 1459.8,128 1460.6,128.5 1461.4,129.2 1462.2,129.8 1463,130.6 1463.8,131.4 1464.6,131.9 1465.4,132.4 1466.2,133.3 1467,134.1 1467.8,134.8 1468.6,135.6 1469.4,136.5 1470.2,137.3 1471,138.2 1471.8,138.9 1472.6,139.7 1473.4,140.7 1474.2,141.9 1475,143 1475.8,144 1476.6,145 1477.4,146.1 1478.2,147.3 1479,148.8 1479.8,150.2 1480.6,151.7 1481.4,153.1 1482.2,154.8 1483,156.6 1483.8,158.4" stroke="#3ecc9b" stroke-width="1.2"/><polyline points="16.6,92.5 20.6,92.5 24.6,92.6 28.6,92.6 32.6,92.7 36.6,92.7 40.6,92.8 44.6,92.8 48.6,92.9 52.6,92.9 56.6,93 60.6,93 64.6,93.1 68.6,93.1 72.6,93.1 76.6,93.2 80.6,93.2 84.6,93.3 88.6,93.3 92.6,93.4 96.6,93.4 100.6,93.5 104.6,93.5 108.6,93.6 112.6,93.7 116.6,93.9 120.6,94 124.6,94.1 128.6,94.2 132.6,94.3 136.6,94.4 140.6,94.5 144.6,94.7 148.6,94.9 152.6,95.1 156.6,95.2 160.6,95.4 164.6,95.6 168.6,95.8 172.6,96 176.6,96.3 180.6,96.7 184.6,97.1 188.6,97.5 192.6,97.9 196.6,98.2 200.6,98.6 204.6,99 208.6,99.4 212.6,99.8 216.6,100.3 220.6,101.2 224.6,102 228.6,102.8 232.6,103.6 236.6,104.5 240.6,105.3 244.6,106 248.6,106.5 252.6,107.1 256.6,107.6 260.6,108.2 264.6,108.7 268.6,109.3 272.6,109.8 276.6,110.4 280.6,111.1 284.6,111.9 288.6,112.6 292.6,113.4 296.6,114.1 300.6,114.8 304.6,115.6 308.6,116.1 312.6,116.3 316.6,116.6 320.6,116.8 324.6,116.8 328.6,116.7 332.6,116.7 336.6,116.6 340.6,116.6 344.6,116.5 348.6,116.5 352.6,116.4 356.6,116.4 360.6,116 364.6,115.6 368.6,115.3 372.6,114.9 376.6,114.5 380.6,114.1 384.6,113.5 388.6,112.9 392.6,112.3 396.6,111.7 400.6,111.1 404.6,110.5 408.6,109.9 412.6,109.3 416.6,108.7 420.6,107.7 424.6,106.7 428.6,105.8 432.6,104.8 436.6,103.9 440.6,102.9 444.6,101.9 448.6,101 452.6,99.8 456.6,98.5 460.6,97.2 464.6,95.9 468.6,94.5 472.6,93.2 476.6,91.9 480.6,90.6 484.6,89.2 488.6,87.2 492.6,85 496.6,82.7 500.6,80.3 501.4,79.8 502.2,79.2 503,78.7 503.8,78.1 504.6,77.6 505.4,77 506.2,76.5 507,75.9 507.8,75.4 508.6,74.8 509.4,74.3 510.2,73.7 511,73.2 511.8,72.6 512.6,72.2 513.4,71.7 514.2,71.2 515,70.8 515.8,70.3 516.6,69.9 517.4,69.4 518.2,69 519,68.5 519.8,68 520.6,67.5 521.4,67 522.2,66.5 523,66.2 523.8,65.9 524.6,65.6 525.4,65.2 526.2,64.8 527,64.4 527.8,64.1 528.6,63.8 529.4,63.5 530.2,63.1 531,62.7 531.8,62.3 532.6,62 533.4,61.8 534.2,61.6 535,61.4 535.8,61.3 536.6,61.2 537.4,61.1 538.2,60.8 539,60.5 539.8,60.3 540.6,60.3 541.4,60.2 542.2,60 543,59.8 543.8,59.6 544.6,59.4 545.4,59.3 546.2,59 547,58.9 547.8,58.7 548.6,58.6 549.4,58.4 550.2,58.1 551,57.8 551.8,57.5 552.6,57.4 553.4,57.3 554.2,57.1 555,57 555.8,56.8 556.6,56.5 557.4,56.3 558.2,56.2 559,56.1 559.8,55.8 560.6,55.7 561.4,55.8 562.2,55.7 563,55.4 563.8,55.2 564.6,54.9 565.4,54.7 566.2,54.5 567,54.3 567.8,54.1 568.6,53.9 569.4,53.8 570.2,53.7 571,53.5 571.8,53.5 572.6,53.1 573.4,52.9 574.2,52.8 575,52.6 575.8,52.6 576.6,52.5 577.4,52.3 578.2,52.4 579,52.5 579.8,52.6 580.6,52.8 581.4,52.9 582.2,53.2 583,53.3 583.8,53.3 584.6,53.3 585.4,53.3 586.2,53.3 587,53.5 587.8,53.8 588.6,53.8 589.4,53.6 590.2,53.7 591,54.1 591.8,54.3 592.6,54.3 593.4,54 594.2,54 595,54.3 595.8,54.4 596.6,54.6 597.4,54.9 598.2,55 599,55.1 599.8,55.3 600.6,55.5 601.4,55.4 602.2,55.4 603,55.7 603.8,55.9 604.6,55.9 605.4,55.8 606.2,55.8 607,56 607.8,56.1 608.6,56.2 609.4,56.6 610.2,56.7 611,56.8 611.8,57.1 612.6,56.9 613.4,56.3 614.2,56.2 615,56.3 615.8,55.8 616.6,55.3 617.4,55.6 618.2,55.9 619,55.8 619.8,55.5 620.6,55.2 621.4,55.1 622.2,54.9 623,54.7 623.8,54.6 624.6,54.4 625.4,54.4 626.2,54.8 627,55 627.8,54.7 628.6,54.4 629.4,54.7 630.2,54.9 631,55.1 631.8,55.3 632.6,55.6 633.4,56.1 634.2,56.3 635,56.4 635.8,56.9 636.6,57.1 637.4,56.8 638.2,56.7 639,57.1 639.8,57.5 640.6,57.4 641.4,57.1 642.2,57.6 643,57.9 643.8,57.7 644.6,57.2 645.4,56.9 646.2,57 647,57.3 647.8,57.7 648.6,57.7 649.4,57.4 650.2,57.2 651,57.4 651.8,57.8 652.6,58.2 653.4,58.2 654.2,58.5 655,58.7 655.8,58.7 656.6,58.9 657.4,59 658.2,58.8 659,58.9 659.8,59.4 660.6,59.6 661.4,59.3 662.2,59.6 663,59.8 663.8,59.7 664.6,59.9 665.4,60.1 666.2,60.3 667,60.4 667.8,60.5 668.6,61 669.4,61 670.2,60.4 671,60.2 671.8,60.6 672.6,61 673.4,61.3 674.2,61.8 675,61.9 675.8,61.3 676.6,60.8 677.4,60.3 678.2,60.1 679,60.1 679.8,59.6 680.6,59 681.4,58.8 682.2,58.8 683,58.7 683.8,58.2 684.6,57.9 685.4,57.8 686.2,57.6 687,57.4 687.8,57.5 688.6,57 689.4,56.8 690.2,57.6 691,58.2 691.8,58.5 692.6,58.4 693.4,57.5 694.2,57.3 695,57.8 695.8,58 696.6,57.7 697.4,57.9 698.2,58.2 699,58.1 699.8,58.4 700.6,58.8 701.4,58.9 702.2,59 703,58.8 703.8,58.5 704.6,58.8 705.4,59.2 706.2,59.5 707,59.8 707.8,60.1 708.6,60.2 709.4,60.2 710.2,60.1 711,60.2 711.8,60.3 712.6,60.7 713.4,60.9 714.2,60.7 715,60.9 715.8,61.1 716.6,61.8 717.4,62.6 718.2,63.1 719,63.4 719.8,63.4 720.6,63 721.4,62.7 722.2,62.5 723,62.1 723.8,61.7 724.6,61.7 725.4,61.6 726.2,61 727,60.3 727.8,59.6 728.6,58.8 729.4,58.1 730.2,58.5 731,59.2 731.8,59.7 732.6,60.6 733.4,61.2 734.2,61.5 735,62.6 735.8,63.9 736.6,64.8 737.4,65.8 738.2,67.3 739,67.9 739.8,67.9 740.6,68.6 741.4,68.4 742.2,67.9 743,68.3 743.8,68.6 744.6,68.3 745.4,68.2 746.2,68.6 747,68.4 747.8,68.2 748.6,68.4 749.4,67.9 750.2,66.9 751,66.6 751.8,66.7 752.6,67.1 753.4,67.3 754.2,67.1 755,66.5 755.8,66.4 756.6,67 757.4,66.9 758.2,66.4 759,66.5 759.8,67.2 760.6,67.7 761.4,67.6 762.2,67.7 763,67.9 763.8,67.5 764.6,67.8 765.4,68.8 766.2,68.6 767,68.2 767.8,68.7 768.6,69.2 769.4,68.8 770.2,68.6 771,68.8 771.8,68.4 772.6,68.2 773.4,68.3 774.2,68.4 775,68.8 775.8,69 776.6,69.1 777.4,69.9 778.2,70.8 779,70.9 779.8,71.2 780.6,71.6 781.4,71.9 782.2,72.6 783,73.6 783.8,74.9 784.6,75.8 785.4,75.6 786.2,74.6 787,73.9 787.8,72.9 788.6,72 789.4,71.5 790.2,69.2 791,66.5 791.8,66.7 792.6,68.8 793.4,70.6 794.2,72.4 795,73.7 795.8,74.1 796.6,73.7 797.4,73.3 798.2,72.7 799,71.9 799.8,71.8 800.6,72.5 801.4,73.2 802.2,74 803,74.3 803.8,75.1 804.6,76.5 805.4,76.7 806.2,75.9 807,74.4 807.8,73.4 808.6,73.1 809.4,72.6 810.2,73 811,74.2 811.8,75.4 812.6,76.4 813.4,76 814.2,74.8 815,73.7 815.8,72.1 816.6,70.8 817.4,70 818.2,70 819,71.4 819.8,73.2 820.6,75.3 821.4,76.9 822.2,77.2 823,76.8 823.8,76.4 824.6,76.2 825.4,76 826.2,75.3 827,75 827.8,75.5 828.6,76.1 829.4,76.7 830.2,77.3 831,77.4 831.8,76.6 832.6,74.6 833.4,71.7 834.2,68.5 835,66.1 835.8,65.9 836.6,68.5 837.4,72.7 838.2,75.9 839,76.8 839.8,77.3 840.6,77.5 841.4,77.4 842.2,78 843,78 843.8,77.1 844.6,76.9 845.4,77.5 846.2,77.9 847,78.3 847.8,78.3 848.6,77.7 849.4,76.6 850.2,74.9 851,72.4 851.8,70 852.6,68.5 853.4,68.7 854.2,71 855,74.2 855.8,76.6 856.6,78.2 857.4,78.4 858.2,76.6 859,73.8 859.8,70.5 860.6,68.1 861.4,68.2 862.2,70.2 863,72.5 863.8,74.7 864.6,76.6 865.4,78.1 866.2,77.9 867,76.4 867.8,75 868.6,73.2 869.4,70.7 870.2,70.2 871,72 871.8,74.4 872.6,76.5 873.4,78.1 874.2,78.7 875,77.2 875.8,75.1 876.6,73.3 877.4,70.8 878.2,68.6 879,68.4 879.8,70.2 880.6,72.8 881.4,75.6 882.2,77.6 883,78.2 883.8,78.5 884.6,78.4 885.4,78.5 886.2,78.8 887,78.1 887.8,77.5 888.6,78 889.4,78.5 890.2,78.5 891,78.2 891.8,77.5 892.6,76.9 893.4,76.9 894.2,75.5 895,71.6 895.8,68.4 896.6,67.9 897.4,68 898.2,69.1 899,72.4 899.8,75.2 900.6,77.3 901.4,79.1 902.2,78.5 903,76.8 903.8,75.9 904.6,75.3 905.4,74.9 906.2,75.5 907,76.7 907.8,77.9 908.6,78.4 909.4,78.5 910.2,78.7 911,78.4 911.8,76.9 912.6,74.4 913.4,72.2 914.2,71.7 915,72.7 915.8,74.1 916.6,76.2 917.4,78.2 918.2,79 919,78.9 919.8,78.2 920.6,77 921.4,74.7 922.2,71.1 923,68.4 923.8,68.3 924.6,69.9 925.4,73 926.2,76.4 927,79 927.8,79.7 928.6,79.5 929.4,79.1 930.2,78.6 931,78.6 931.8,78.9 932.6,78.4 933.4,77.5 934.2,77.6 935,78.8 935.8,79 936.6,78.4 937.4,77.5 938.2,75.8 939,73.4 939.8,70.8 940.6,68.4 941.4,67.7 942.2,68.6 943,70.9 943.8,74.2 944.6,76.5 945.4,77.5 946.2,78 947,78.6 947.8,79.3 948.6,79.7 949.4,79.3 950.2,78.7 951,79 951.8,79.5 952.6,79.1 953.4,78.4 954.2,78 955,77.6 955.8,76 956.6,73.1 957.4,69.9 958.2,67.8 959,66.7 959.8,67.9 960.6,71.6 961.4,75.4 962.2,77.5 963,77.9 963.8,76.9 964.6,75.4 965.4,72.5 966.2,69.5 967,68.5 967.8,68.8 968.6,69.5 969.4,71.8 970.2,74.7 971,76.7 971.8,77.9 972.6,77.7 973.4,76.6 974.2,74.4 975,72.3 975.8,71.1 976.6,71.6 977.4,73.8 978.2,75.8 979,77 979.8,77.2 980.6,77.1 981.4,76.9 982.2,75.8 983,74.7 983.8,73 984.6,70.7 985.4,70.4 986.2,71.6 987,72.9 987.8,74.7 988.6,76.5 989.4,77.9 990.2,78.5 991,78.7 991.8,78.6 992.6,77.8 993.4,77.3 994.2,77.7 995,77.7 995.8,77.6 996.6,77.9 997.4,77.4 998.2,76.8 999,75.9 999.8,73.7 1000.6,71 1001.4,68 1002.2,65.8 1003,65.8 1003.8,67.9 1004.6,71.5 1005.4,75.3 1006.2,77.9 1007,78.8 1007.8,77.9 1008.6,77.1 1009.4,75.4 1010.2,73.3 1011,73.3 1011.8,74.6 1012.6,75.4 1013.4,76.8 1014.2,78.2 1015,79.1 1015.8,79.1 1016.6,78.2 1017.4,77.4 1018.2,76.3 1019,73.6 1019.8,70.9 1020.6,70.8 1021.4,72.8 1022.2,75 1023,76.7 1023.8,78.8 1024.6,80.2 1025.4,79.1 1026.2,76.6 1027,74.3 1027.8,72.4 1028.6,71.7 1029.4,72.6 1030.2,73.5 1031,75.1 1031.8,77.4 1032.6,79.2 1033.4,80.3 1034.2,80.3 1035,79 1035.8,78.3 1036.6,79.3 1037.4,80.3 1038.2,80 1039,78.6 1039.8,78.7 1040.6,80.2 1041.4,80.7 1042.2,79.9 1043,78.5 1043.8,76.5 1044.6,73 1045.4,69.7 1046.2,68.4 1047,69.3 1047.8,71.9 1048.6,74.4 1049.4,76 1050.2,78 1051,79 1051.8,78.7 1052.6,78.9 1053.4,79.5 1054.2,79.5 1055,79 1055.8,78.6 1056.6,78.8 1057.4,79.3 1058.2,79.2 1059,79.1 1059.8,79.1 1060.6,78 1061.4,76.4 1062.2,75.2 1063,73.5 1063.8,71.6 1064.6,71.7 1065.4,73.7 1066.2,75.3 1067,76.5 1067.8,78.7 1068.6,79.9 1069.4,78.8 1070.2,77.7 1071,76.6 1071.8,74.8 1072.6,73.9 1073.4,74.7 1074.2,76.2 1075,77.5 1075.8,78.9 1076.6,79.6 1077.4,79.4 1078.2,78.9 1079,77.7 1079.8,75.6 1080.6,74 1081.4,73.5 1082.2,74.1 1083,75.2 1083.8,76.7 1084.6,78.6 1085.4,79.9 1086.2,79.4 1087,78 1087.8,76.8 1088.6,74.9 1089.4,73 1090.2,72.8 1091,73.8 1091.8,75.5 1092.6,77.4 1093.4,78.1 1094.2,78.3 1095,79 1095.8,79.3 1096.6,79.8 1097.4,80.2 1098.2,79.9 1099,79.7 1099.8,80 1100.6,80 1101.4,79.4 1102.2,79.3 1103,79.8 1103.8,79.2 1104.6,76.9 1105.4,74 1106.2,71.3 1107,70.4 1107.8,71.2 1108.6,73.1 1109.4,75.9 1110.2,77.5 1111,78 1111.8,79.2 1112.6,79.6 1113.4,78.8 1114.2,77.3 1115,75.4 1115.8,74.7 1116.6,75.2 1117.4,76.1 1118.2,77.9 1119,79.4 1119.8,79.5 1120.6,79.9 1121.4,80 1122.2,78.1 1123,75.8 1123.8,74.8 1124.6,74.5 1125.4,74.6 1126.2,75.6 1127,77.8 1127.8,80 1128.6,81.3 1129.4,80.6 1130.2,78.9 1131,77.5 1131.8,75.7 1132.6,73.6 1133.4,73.3 1134.2,74.8 1135,76.6 1135.8,78 1136.6,79 1137.4,79.6 1138.2,79.2 1139,78.7 1139.8,77 1140.6,75 1141.4,73.1 1142.2,72.2 1143,73.7 1143.8,76.3 1144.6,78.4 1145.4,79.4 1146.2,80.2 1147,80.5 1147.8,79.2 1148.6,76.7 1149.4,74.7 1150.2,74.1 1151,74.1 1151.8,75 1152.6,76.9 1153.4,79 1154.2,80.5 1155,80.8 1155.8,80.2 1156.6,79.8 1157.4,79.7 1158.2,78.4 1159,76.3 1159.8,75.7 1160.6,76.4 1161.4,77.6 1162.2,79.3 1163,80.7 1163.8,81.4 1164.6,81.6 1165.4,80.6 1166.2,78.2 1167,76.2 1167.8,75.9 1168.6,76 1169.4,76.2 1170.2,77.7 1171,79.1 1171.8,79.5 1172.6,80.6 1173.4,81.3 1174.2,80.6 1175,79.8 1175.8,79.2 1176.6,79 1177.4,79.3 1178.2,79.4 1179,79.6 1179.8,80.4 1180.6,81.2 1181.4,82 1182.2,82.1 1183,81.3 1183.8,80.5 1184.6,79.8 1185.4,79.2 1186.2,78.8 1187,78.9 1187.8,79.4 1188.6,80.5 1189.4,81.4 1190.2,81.7 1191,82 1191.8,81.3 1192.6,79 1193.4,77.8 1194.2,77.9 1195,78.1 1195.8,79.3 1196.6,80.9 1197.4,81.5 1198.2,81.6 1199,82.2 1199.8,82.5 1200.6,82 1201.4,81.9 1202.2,81.1 1203,79.4 1203.8,79.4 1204.6,80.3 1205.4,80.6 1206.2,81.6 1207,82.3 1207.8,82.1 1208.6,82.3 1209.4,82.2 1210.2,81.9 1211,81.7 1211.8,81.2 1212.6,81.2 1213.4,81.4 1214.2,80.7 1215,80.8 1215.8,81.1 1216.6,81.9 1217.4,82 1218.2,81.4 1219,81.7 1219.8,82.5 1220.6,82.5 1221.4,82.6 1222.2,83.7 1223,83.9 1223.8,83.4 1224.6,83.5 1225.4,83.2 1226.2,83.3 1227,83.8 1227.8,84.1 1228.6,84.4 1229.4,84.4 1230.2,85.3 1231,86.4 1231.8,86.7 1232.6,86.9 1233.4,86.2 1234.2,85.7 1235,86.7 1235.8,87.1 1236.6,86.6 1237.4,86 1238.2,85.6 1239,85.6 1239.8,86.1 1240.6,86.4 1241.4,86.4 1242.2,86 1243,85.4 1243.8,85.7 1244.6,86.3 1245.4,86.7 1246.2,86.7 1247,86.8 1247.8,87 1248.6,87 1249.4,87.4 1250.2,87.9 1251,87.6 1251.8,87.3 1252.6,88.1 1253.4,88.6 1254.2,88.2 1255,87.8 1255.8,88.3 1256.6,88.6 1257.4,88.5 1258.2,88.7 1259,88.9 1259.8,89.4 1260.6,89.8 1261.4,89.5 1262.2,89.4 1263,89.7 1263.8,90 1264.6,90.4 1265.4,90.5 1266.2,90.4 1267,90.5 1267.8,91.1 1268.6,91.1 1269.4,90.5 1270.2,90.7 1271,90.9 1271.8,90.6 1272.6,90.9 1273.4,91.9 1274.2,92.7 1275,92.7 1275.8,92 1276.6,91.6 1277.4,92.2 1278.2,93.1 1279,92.9 1279.8,93.5 1280.6,94.9 1281.4,94.8 1282.2,94.5 1283,95.2 1283.8,95 1284.6,94.3 1285.4,94.9 1286.2,95.6 1287,95.2 1287.8,94.9 1288.6,95.4 1289.4,95.2 1290.2,95.5 1291,96.4 1291.8,96.3 1292.6,95.8 1293.4,95.8 1294.2,96.5 1295,96.8 1295.8,96.3 1296.6,96.2 1297.4,96.2 1298.2,95.7 1299,95.5 1299.8,96.4 1300.6,97.1 1301.4,97.1 1302.2,97.3 1303,97.4 1303.8,97.5 1304.6,97.2 1305.4,96.8 1306.2,96.8 1307,97.1 1307.8,97.1 1308.6,96.9 1309.4,96.7 1310.2,96.4 1311,96.6 1311.8,97.4 1312.6,97.9 1313.4,97.9 1314.2,97.8 1315,98.1 1315.8,98.3 1316.6,97.7 1317.4,98 1318.2,98.9 1319,99.1 1319.8,98.5 1320.6,97.8 1321.4,97.6 1322.2,97.9 1323,98.2 1323.8,98.4 1324.6,98.7 1325.4,98.6 1326.2,98.2 1327,98.1 1327.8,98.4 1328.6,99.2 1329.4,99.2 1330.2,98.8 1331,99 1331.8,99.3 1332.6,99.8 1333.4,100.2 1334.2,99.6 1335,98.9 1335.8,99.1 1336.6,99.5 1337.4,99.4 1338.2,99.3 1339,99.2 1339.8,99.3 1340.6,99.5 1341.4,99.9 1342.2,100.1 1343,99.8 1343.8,99.3 1344.6,99.3 1345.4,99.5 1346.2,99.5 1347,99.4 1347.8,99.8 1348.6,100.4 1349.4,100 1350.2,99.6 1351,100.2 1351.8,101 1352.6,100.6 1353.4,100 1354.2,100 1355,100.3 1355.8,100.1 1356.6,99.7 1357.4,99.9 1358.2,100 1359,100 1359.8,100.3 1360.6,100.8 1361.4,101.1 1362.2,101.2 1363,101 1363.8,101 1364.6,101.3 1365.4,101.4 1366.2,101.1 1367,100.9 1367.8,101.3 1368.6,101.5 1369.4,101.5 1370.2,101.7 1371,101.9 1371.8,101.5 1372.6,101.2 1373.4,101.4 1374.2,101.9 1375,102.2 1375.8,102.3 1376.6,102.5 1377.4,102.4 1378.2,102.3 1379,102.6 1379.8,102.8 1380.6,102.9 1381.4,103.1 1382.2,102.9 1383,102.5 1383.8,102.7 1384.6,103.3 1385.4,103.6 1386.2,103.5 1387,103.7 1387.8,104.1 1388.6,104 1389.4,103.7 1390.2,103.7 1391,103.9 1391.8,104.5 1392.6,105 1393.4,104.8 1394.2,104.8 1395,105.2 1395.8,105.4 1396.6,105.6 1397.4,105.9 1398.2,106 1399,106.2 1399.8,106.3 1400.6,106.1 1401.4,106.2 1402.2,106.6 1403,106.9 1403.8,107.2 1404.6,107.2 1405.4,107.6 1406.2,108 1407,108.2 1407.8,108.3 1408.6,108.3 1409.4,108.5 1410.2,109 1411,108.9 1411.8,108.7 1412.6,108.8 1413.4,109.2 1414.2,109.8 1415,110.2 1415.8,110.2 1416.6,110.3 1417.4,110.5 1418.2,110.9 1419,111.3 1419.8,111.5 1420.6,111.6 1421.4,111.5 1422.2,111.6 1423,111.8 1423.8,112.2 1424.6,112.7 1425.4,112.9 1426.2,113.1 1427,113.1 1427.8,113.3 1428.6,113.6 1429.4,113.9 1430.2,114.1 1431,114.3 1431.8,114.6 1432.6,114.8 1433.4,114.9 1434.2,115.2 1435,115.7 1435.8,115.9 1436.6,116 1437.4,116.2 1438.2,116.3 1439,116.4 1439.8,116.8 1440.6,117.5 1441.4,117.9 1442.2,118.1 1443,118.4 1443.8,118.7 1444.6,119.1 1445.4,119.4 1446.2,119.9 1447,120.4 1447.8,120.7 1448.6,121.1 1449.4,121.5 1450.2,122.1 1451,122.4 1451.8,122.6 1452.6,123 1453.4,123.5 1454.2,123.9 1455,124.4 1455.8,124.9 1456.6,125.5 1457.4,126.3 1458.2,126.9 1459,127.4 1459.8,127.9 1460.6,128.3 1461.4,128.6 1462.2,129.2 1463,129.9 1463.8,130.7 1464.6,131.5 1465.4,132.2 1466.2,132.9 1467,133.7 1467.8,134.5 1468.6,135.4 1469.4,136.2 1470.2,137.1 1471,137.9 1471.8,138.8 1472.6,139.6 1473.4,140.5 1474.2,141.6 1475,142.8 1475.8,143.8 1476.6,144.6 1477.4,145.8 1478.2,147.3 1479,148.8 1479.8,150.3 1480.6,151.6 1481.4,152.9 1482.2,154.5 1483,156.3 1483.8,158.2" stroke="#c61b1b" stroke-width="1.3"/></svg>
</body></html>
